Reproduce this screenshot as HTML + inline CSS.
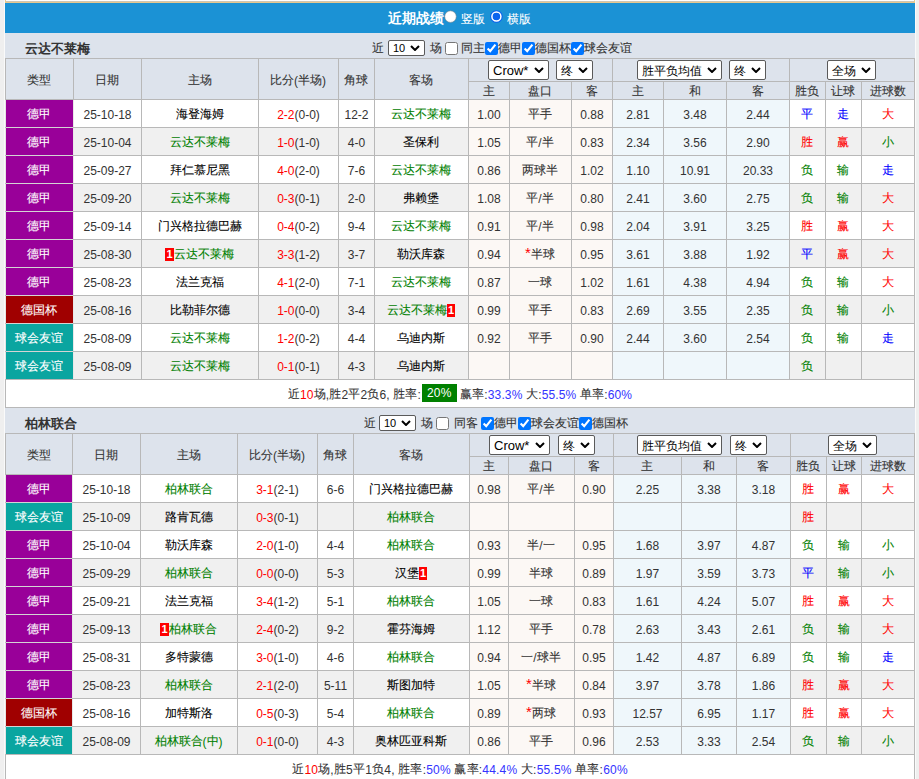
<!DOCTYPE html><html><head><meta charset="utf-8"><style>
html,body{margin:0;padding:0;}
body{width:919px;height:779px;overflow:hidden;position:relative;background:#efefef;font-family:'Liberation Sans', sans-serif;}
select,input{font-family:'Liberation Sans', sans-serif;}
.c{position:relative;top:-1px;-webkit-text-stroke:0.1px currentColor;}
.cb{-webkit-text-stroke:0;}
</style></head><body><div style="position:absolute;left:5px;top:0px;width:910px;height:1px;background:#ffffff;"></div>
<div style="position:absolute;left:5px;top:1px;width:910px;height:1px;background:#cfc6b4;"></div>
<div style="position:absolute;left:5px;top:2px;width:910px;height:1px;background:#e6c88e;"></div>
<div style="position:absolute;left:4px;top:0px;width:1px;height:779px;background:#fafafa;"></div>
<div style="position:absolute;left:915px;top:0px;width:1px;height:779px;background:#fafafa;"></div>
<div style="position:absolute;left:5px;top:3px;width:910px;height:30px;background:#1b92d5;"></div>
<div style="position:absolute;left:5px;top:0px;width:1px;height:3px;background:#e8ca8c;"></div>
<div style="position:absolute;left:914px;top:0px;width:1px;height:3px;background:#e8ca8c;"></div>
<div style="position:absolute;left:388px;top:4px;width:58px;height:30px;line-height:30px;text-align:left;color:#fff;font-size:14px;font-weight:bold;white-space:nowrap;"><span class="c cb">近期战绩</span></div>
<svg style="position:absolute;left:443px;top:9px" width="15" height="15" viewBox="0 0 15 15"><circle cx="7.5" cy="7.6" r="5.8" fill="#fff" stroke="#6d7f8c" stroke-width="0.6"/></svg>
<svg style="position:absolute;left:489px;top:9px" width="15" height="15" viewBox="0 0 15 15"><circle cx="7.4" cy="7.5" r="6.3" fill="#0a63ee"/><circle cx="7.4" cy="7.5" r="4.5" fill="none" stroke="#fff" stroke-width="1.5"/><circle cx="7.4" cy="7.5" r="3.4" fill="#0a63ee"/></svg>
<div style="position:absolute;left:461px;top:5px;width:26px;height:30px;line-height:30px;text-align:left;color:#fff;font-size:12px;font-weight:normal;white-space:nowrap;"><span class="c">竖版</span></div>
<div style="position:absolute;left:507px;top:5px;width:26px;height:30px;line-height:30px;text-align:left;color:#fff;font-size:12px;font-weight:normal;white-space:nowrap;"><span class="c">横版</span></div>
<div style="position:absolute;left:5px;top:33px;width:910px;height:25px;background:#dde3ec;"></div>
<div style="position:absolute;left:25px;top:37px;width:200px;height:25px;line-height:25px;text-align:left;color:#333333;font-size:13px;font-weight:bold;white-space:nowrap;"><span class="c cb">云达不莱梅</span></div>
<div style="position:absolute;left:372px;top:37px;width:60px;height:25px;line-height:25px;text-align:left;color:#333333;font-size:12px;font-weight:normal;white-space:nowrap;"><span class="c">近</span></div>
<div style="position:absolute;left:430px;top:37px;width:60px;height:25px;line-height:25px;text-align:left;color:#333333;font-size:12px;font-weight:normal;white-space:nowrap;"><span class="c">场</span></div>
<input type="checkbox"  style="position:absolute;left:445px;top:42px;width:13px;height:13px;margin:0">
<div style="position:absolute;left:461px;top:37px;width:60px;height:25px;line-height:25px;text-align:left;color:#333333;font-size:12px;font-weight:normal;white-space:nowrap;"><span class="c">同主</span></div>
<input type="checkbox" checked style="position:absolute;left:485px;top:42px;width:13px;height:13px;margin:0">
<div style="position:absolute;left:498px;top:37px;width:60px;height:25px;line-height:25px;text-align:left;color:#333333;font-size:12px;font-weight:normal;white-space:nowrap;"><span class="c">德甲</span></div>
<input type="checkbox" checked style="position:absolute;left:522px;top:42px;width:13px;height:13px;margin:0">
<div style="position:absolute;left:535px;top:37px;width:60px;height:25px;line-height:25px;text-align:left;color:#333333;font-size:12px;font-weight:normal;white-space:nowrap;"><span class="c">德国杯</span></div>
<input type="checkbox" checked style="position:absolute;left:571px;top:42px;width:13px;height:13px;margin:0">
<div style="position:absolute;left:584px;top:37px;width:60px;height:25px;line-height:25px;text-align:left;color:#333333;font-size:12px;font-weight:normal;white-space:nowrap;"><span class="c">球会友谊</span></div>
<div style="position:absolute;left:388px;top:40px;width:35px;height:14px;background:#fff;border:1px solid #5a5a5a;border-radius:2px"></div>
<div style="position:absolute;left:393px;top:40px;height:16px;line-height:16px;font-size:11px;color:#000;white-space:nowrap">10</div>
<svg style="position:absolute;left:410px;top:45px" width="10" height="6" viewBox="0 0 10 6"><path d="M1 1 L5.0 5 L9 1" fill="none" stroke="#000" stroke-width="2"/></svg>
<div style="position:absolute;left:5px;top:58px;width:910px;height:41px;background:#dde3ec;"></div>
<div style="position:absolute;left:5.5px;top:61px;width:67px;height:40px;line-height:40px;text-align:center;color:#333333;font-size:12px;font-weight:normal;white-space:nowrap;"><span class="c">类型</span></div>
<div style="position:absolute;left:73.5px;top:61px;width:67px;height:40px;line-height:40px;text-align:center;color:#333333;font-size:12px;font-weight:normal;white-space:nowrap;"><span class="c">日期</span></div>
<div style="position:absolute;left:141.5px;top:61px;width:116px;height:40px;line-height:40px;text-align:center;color:#333333;font-size:12px;font-weight:normal;white-space:nowrap;"><span class="c">主场</span></div>
<div style="position:absolute;left:258.5px;top:61px;width:79px;height:40px;line-height:40px;text-align:center;color:#333333;font-size:12px;font-weight:normal;white-space:nowrap;"><span class="c">比分</span>(<span class="c">半场</span>)</div>
<div style="position:absolute;left:338.5px;top:61px;width:35px;height:40px;line-height:40px;text-align:center;color:#333333;font-size:12px;font-weight:normal;white-space:nowrap;"><span class="c">角球</span></div>
<div style="position:absolute;left:374.5px;top:61px;width:93px;height:40px;line-height:40px;text-align:center;color:#333333;font-size:12px;font-weight:normal;white-space:nowrap;"><span class="c">客场</span></div>
<div style="position:absolute;left:468.5px;top:84px;width:40px;height:17px;line-height:17px;text-align:center;color:#333333;font-size:12px;font-weight:normal;white-space:nowrap;"><span class="c">主</span></div>
<div style="position:absolute;left:509.5px;top:84px;width:61px;height:17px;line-height:17px;text-align:center;color:#333333;font-size:12px;font-weight:normal;white-space:nowrap;"><span class="c">盘口</span></div>
<div style="position:absolute;left:571.5px;top:84px;width:40px;height:17px;line-height:17px;text-align:center;color:#333333;font-size:12px;font-weight:normal;white-space:nowrap;"><span class="c">客</span></div>
<div style="position:absolute;left:612.5px;top:84px;width:50px;height:17px;line-height:17px;text-align:center;color:#333333;font-size:12px;font-weight:normal;white-space:nowrap;"><span class="c">主</span></div>
<div style="position:absolute;left:663.5px;top:84px;width:62px;height:17px;line-height:17px;text-align:center;color:#333333;font-size:12px;font-weight:normal;white-space:nowrap;"><span class="c">和</span></div>
<div style="position:absolute;left:726.5px;top:84px;width:62px;height:17px;line-height:17px;text-align:center;color:#333333;font-size:12px;font-weight:normal;white-space:nowrap;"><span class="c">客</span></div>
<div style="position:absolute;left:789.5px;top:84px;width:35px;height:17px;line-height:17px;text-align:center;color:#333333;font-size:12px;font-weight:normal;white-space:nowrap;"><span class="c">胜负</span></div>
<div style="position:absolute;left:825.5px;top:84px;width:35px;height:17px;line-height:17px;text-align:center;color:#333333;font-size:12px;font-weight:normal;white-space:nowrap;"><span class="c">让球</span></div>
<div style="position:absolute;left:861.5px;top:84px;width:52px;height:17px;line-height:17px;text-align:center;color:#333333;font-size:12px;font-weight:normal;white-space:nowrap;"><span class="c">进球数</span></div>
<div style="position:absolute;left:488px;top:60px;width:59px;height:18px;background:#fff;border:1px solid #5a5a5a;border-radius:2px"></div>
<div style="position:absolute;left:493px;top:61px;height:20px;line-height:20px;font-size:13px;color:#000;white-space:nowrap">Crow*</div>
<svg style="position:absolute;left:534px;top:67px" width="10" height="6" viewBox="0 0 10 6"><path d="M1 1 L5.0 5 L9 1" fill="none" stroke="#000" stroke-width="2"/></svg>
<div style="position:absolute;left:556px;top:60px;width:35px;height:18px;background:#fff;border:1px solid #5a5a5a;border-radius:2px"></div>
<div style="position:absolute;left:561px;top:61px;height:20px;line-height:20px;font-size:12px;color:#000;white-space:nowrap">终</div>
<svg style="position:absolute;left:578px;top:67px" width="10" height="6" viewBox="0 0 10 6"><path d="M1 1 L5.0 5 L9 1" fill="none" stroke="#000" stroke-width="2"/></svg>
<div style="position:absolute;left:637px;top:60px;width:83px;height:18px;background:#fff;border:1px solid #5a5a5a;border-radius:2px"></div>
<div style="position:absolute;left:642px;top:61px;height:20px;line-height:20px;font-size:12px;color:#000;white-space:nowrap">胜平负均值</div>
<svg style="position:absolute;left:707px;top:67px" width="10" height="6" viewBox="0 0 10 6"><path d="M1 1 L5.0 5 L9 1" fill="none" stroke="#000" stroke-width="2"/></svg>
<div style="position:absolute;left:729px;top:60px;width:35px;height:18px;background:#fff;border:1px solid #5a5a5a;border-radius:2px"></div>
<div style="position:absolute;left:734px;top:61px;height:20px;line-height:20px;font-size:12px;color:#000;white-space:nowrap">终</div>
<svg style="position:absolute;left:751px;top:67px" width="10" height="6" viewBox="0 0 10 6"><path d="M1 1 L5.0 5 L9 1" fill="none" stroke="#000" stroke-width="2"/></svg>
<div style="position:absolute;left:827px;top:60px;width:47px;height:18px;background:#fff;border:1px solid #5a5a5a;border-radius:2px"></div>
<div style="position:absolute;left:832px;top:61px;height:20px;line-height:20px;font-size:12px;color:#000;white-space:nowrap">全场</div>
<svg style="position:absolute;left:861px;top:67px" width="10" height="6" viewBox="0 0 10 6"><path d="M1 1 L5.0 5 L9 1" fill="none" stroke="#000" stroke-width="2"/></svg>
<div style="position:absolute;left:5px;top:99px;width:910px;height:28px;background:#ffffff;"></div>
<div style="position:absolute;left:468px;top:99px;width:41px;height:28px;background:#fcf8f5;"></div>
<div style="position:absolute;left:509px;top:99px;width:62px;height:28px;background:#fcf8f5;"></div>
<div style="position:absolute;left:571px;top:99px;width:41px;height:28px;background:#fcf8f5;"></div>
<div style="position:absolute;left:612px;top:99px;width:51px;height:28px;background:#eff7fb;"></div>
<div style="position:absolute;left:663px;top:99px;width:63px;height:28px;background:#eff7fb;"></div>
<div style="position:absolute;left:726px;top:99px;width:63px;height:28px;background:#eff7fb;"></div>
<div style="position:absolute;left:5px;top:99px;width:68px;height:28px;background:#990099;"></div>
<div style="position:absolute;left:5px;top:127px;width:910px;height:28px;background:#f0f0f0;"></div>
<div style="position:absolute;left:468px;top:127px;width:41px;height:28px;background:#fcf8f5;"></div>
<div style="position:absolute;left:509px;top:127px;width:62px;height:28px;background:#fcf8f5;"></div>
<div style="position:absolute;left:571px;top:127px;width:41px;height:28px;background:#fcf8f5;"></div>
<div style="position:absolute;left:612px;top:127px;width:51px;height:28px;background:#eff7fb;"></div>
<div style="position:absolute;left:663px;top:127px;width:63px;height:28px;background:#eff7fb;"></div>
<div style="position:absolute;left:726px;top:127px;width:63px;height:28px;background:#eff7fb;"></div>
<div style="position:absolute;left:5px;top:127px;width:68px;height:28px;background:#990099;"></div>
<div style="position:absolute;left:5px;top:155px;width:910px;height:28px;background:#ffffff;"></div>
<div style="position:absolute;left:468px;top:155px;width:41px;height:28px;background:#fcf8f5;"></div>
<div style="position:absolute;left:509px;top:155px;width:62px;height:28px;background:#fcf8f5;"></div>
<div style="position:absolute;left:571px;top:155px;width:41px;height:28px;background:#fcf8f5;"></div>
<div style="position:absolute;left:612px;top:155px;width:51px;height:28px;background:#eff7fb;"></div>
<div style="position:absolute;left:663px;top:155px;width:63px;height:28px;background:#eff7fb;"></div>
<div style="position:absolute;left:726px;top:155px;width:63px;height:28px;background:#eff7fb;"></div>
<div style="position:absolute;left:5px;top:155px;width:68px;height:28px;background:#990099;"></div>
<div style="position:absolute;left:5px;top:183px;width:910px;height:28px;background:#f0f0f0;"></div>
<div style="position:absolute;left:468px;top:183px;width:41px;height:28px;background:#fcf8f5;"></div>
<div style="position:absolute;left:509px;top:183px;width:62px;height:28px;background:#fcf8f5;"></div>
<div style="position:absolute;left:571px;top:183px;width:41px;height:28px;background:#fcf8f5;"></div>
<div style="position:absolute;left:612px;top:183px;width:51px;height:28px;background:#eff7fb;"></div>
<div style="position:absolute;left:663px;top:183px;width:63px;height:28px;background:#eff7fb;"></div>
<div style="position:absolute;left:726px;top:183px;width:63px;height:28px;background:#eff7fb;"></div>
<div style="position:absolute;left:5px;top:183px;width:68px;height:28px;background:#990099;"></div>
<div style="position:absolute;left:5px;top:211px;width:910px;height:28px;background:#ffffff;"></div>
<div style="position:absolute;left:468px;top:211px;width:41px;height:28px;background:#fcf8f5;"></div>
<div style="position:absolute;left:509px;top:211px;width:62px;height:28px;background:#fcf8f5;"></div>
<div style="position:absolute;left:571px;top:211px;width:41px;height:28px;background:#fcf8f5;"></div>
<div style="position:absolute;left:612px;top:211px;width:51px;height:28px;background:#eff7fb;"></div>
<div style="position:absolute;left:663px;top:211px;width:63px;height:28px;background:#eff7fb;"></div>
<div style="position:absolute;left:726px;top:211px;width:63px;height:28px;background:#eff7fb;"></div>
<div style="position:absolute;left:5px;top:211px;width:68px;height:28px;background:#990099;"></div>
<div style="position:absolute;left:5px;top:239px;width:910px;height:28px;background:#f0f0f0;"></div>
<div style="position:absolute;left:468px;top:239px;width:41px;height:28px;background:#fcf8f5;"></div>
<div style="position:absolute;left:509px;top:239px;width:62px;height:28px;background:#fcf8f5;"></div>
<div style="position:absolute;left:571px;top:239px;width:41px;height:28px;background:#fcf8f5;"></div>
<div style="position:absolute;left:612px;top:239px;width:51px;height:28px;background:#eff7fb;"></div>
<div style="position:absolute;left:663px;top:239px;width:63px;height:28px;background:#eff7fb;"></div>
<div style="position:absolute;left:726px;top:239px;width:63px;height:28px;background:#eff7fb;"></div>
<div style="position:absolute;left:5px;top:239px;width:68px;height:28px;background:#990099;"></div>
<div style="position:absolute;left:5px;top:267px;width:910px;height:28px;background:#ffffff;"></div>
<div style="position:absolute;left:468px;top:267px;width:41px;height:28px;background:#fcf8f5;"></div>
<div style="position:absolute;left:509px;top:267px;width:62px;height:28px;background:#fcf8f5;"></div>
<div style="position:absolute;left:571px;top:267px;width:41px;height:28px;background:#fcf8f5;"></div>
<div style="position:absolute;left:612px;top:267px;width:51px;height:28px;background:#eff7fb;"></div>
<div style="position:absolute;left:663px;top:267px;width:63px;height:28px;background:#eff7fb;"></div>
<div style="position:absolute;left:726px;top:267px;width:63px;height:28px;background:#eff7fb;"></div>
<div style="position:absolute;left:5px;top:267px;width:68px;height:28px;background:#990099;"></div>
<div style="position:absolute;left:5px;top:295px;width:910px;height:28px;background:#f0f0f0;"></div>
<div style="position:absolute;left:468px;top:295px;width:41px;height:28px;background:#fcf8f5;"></div>
<div style="position:absolute;left:509px;top:295px;width:62px;height:28px;background:#fcf8f5;"></div>
<div style="position:absolute;left:571px;top:295px;width:41px;height:28px;background:#fcf8f5;"></div>
<div style="position:absolute;left:612px;top:295px;width:51px;height:28px;background:#eff7fb;"></div>
<div style="position:absolute;left:663px;top:295px;width:63px;height:28px;background:#eff7fb;"></div>
<div style="position:absolute;left:726px;top:295px;width:63px;height:28px;background:#eff7fb;"></div>
<div style="position:absolute;left:5px;top:295px;width:68px;height:28px;background:#a00000;"></div>
<div style="position:absolute;left:5px;top:323px;width:910px;height:28px;background:#ffffff;"></div>
<div style="position:absolute;left:468px;top:323px;width:41px;height:28px;background:#fcf8f5;"></div>
<div style="position:absolute;left:509px;top:323px;width:62px;height:28px;background:#fcf8f5;"></div>
<div style="position:absolute;left:571px;top:323px;width:41px;height:28px;background:#fcf8f5;"></div>
<div style="position:absolute;left:612px;top:323px;width:51px;height:28px;background:#eff7fb;"></div>
<div style="position:absolute;left:663px;top:323px;width:63px;height:28px;background:#eff7fb;"></div>
<div style="position:absolute;left:726px;top:323px;width:63px;height:28px;background:#eff7fb;"></div>
<div style="position:absolute;left:5px;top:323px;width:68px;height:28px;background:#0aa5a0;"></div>
<div style="position:absolute;left:5px;top:351px;width:910px;height:28px;background:#f0f0f0;"></div>
<div style="position:absolute;left:468px;top:351px;width:41px;height:28px;background:#fcf8f5;"></div>
<div style="position:absolute;left:509px;top:351px;width:62px;height:28px;background:#fcf8f5;"></div>
<div style="position:absolute;left:571px;top:351px;width:41px;height:28px;background:#fcf8f5;"></div>
<div style="position:absolute;left:612px;top:351px;width:51px;height:28px;background:#eff7fb;"></div>
<div style="position:absolute;left:663px;top:351px;width:63px;height:28px;background:#eff7fb;"></div>
<div style="position:absolute;left:726px;top:351px;width:63px;height:28px;background:#eff7fb;"></div>
<div style="position:absolute;left:5px;top:351px;width:68px;height:28px;background:#0aa5a0;"></div>
<div style="position:absolute;left:5px;top:379px;width:910px;height:28px;background:#ffffff;"></div>
<div style="position:absolute;left:5px;top:58px;width:910px;height:1px;background:#b8b8b8;"></div>
<div style="position:absolute;left:468px;top:81px;width:447px;height:1px;background:#b8b8b8;"></div>
<div style="position:absolute;left:5px;top:99px;width:910px;height:1px;background:#b8b8b8;"></div>
<div style="position:absolute;left:5px;top:127px;width:910px;height:1px;background:#b8b8b8;"></div>
<div style="position:absolute;left:5px;top:155px;width:910px;height:1px;background:#b8b8b8;"></div>
<div style="position:absolute;left:5px;top:183px;width:910px;height:1px;background:#b8b8b8;"></div>
<div style="position:absolute;left:5px;top:211px;width:910px;height:1px;background:#b8b8b8;"></div>
<div style="position:absolute;left:5px;top:239px;width:910px;height:1px;background:#b8b8b8;"></div>
<div style="position:absolute;left:5px;top:267px;width:910px;height:1px;background:#b8b8b8;"></div>
<div style="position:absolute;left:5px;top:295px;width:910px;height:1px;background:#b8b8b8;"></div>
<div style="position:absolute;left:5px;top:323px;width:910px;height:1px;background:#b8b8b8;"></div>
<div style="position:absolute;left:5px;top:351px;width:910px;height:1px;background:#b8b8b8;"></div>
<div style="position:absolute;left:5px;top:379px;width:910px;height:1px;background:#b8b8b8;"></div>
<div style="position:absolute;left:5px;top:407px;width:910px;height:1px;background:#b8b8b8;"></div>
<div style="position:absolute;left:5px;top:58px;width:1px;height:322px;background:#b8b8b8;"></div>
<div style="position:absolute;left:73px;top:58px;width:1px;height:322px;background:#b8b8b8;"></div>
<div style="position:absolute;left:141px;top:58px;width:1px;height:322px;background:#b8b8b8;"></div>
<div style="position:absolute;left:258px;top:58px;width:1px;height:322px;background:#b8b8b8;"></div>
<div style="position:absolute;left:338px;top:58px;width:1px;height:322px;background:#b8b8b8;"></div>
<div style="position:absolute;left:374px;top:58px;width:1px;height:322px;background:#b8b8b8;"></div>
<div style="position:absolute;left:468px;top:58px;width:1px;height:322px;background:#b8b8b8;"></div>
<div style="position:absolute;left:509px;top:81px;width:1px;height:299px;background:#b8b8b8;"></div>
<div style="position:absolute;left:571px;top:81px;width:1px;height:299px;background:#b8b8b8;"></div>
<div style="position:absolute;left:612px;top:58px;width:1px;height:322px;background:#b8b8b8;"></div>
<div style="position:absolute;left:663px;top:81px;width:1px;height:299px;background:#b8b8b8;"></div>
<div style="position:absolute;left:726px;top:81px;width:1px;height:299px;background:#b8b8b8;"></div>
<div style="position:absolute;left:789px;top:58px;width:1px;height:322px;background:#b8b8b8;"></div>
<div style="position:absolute;left:825px;top:81px;width:1px;height:299px;background:#b8b8b8;"></div>
<div style="position:absolute;left:861px;top:81px;width:1px;height:299px;background:#b8b8b8;"></div>
<div style="position:absolute;left:914px;top:58px;width:1px;height:322px;background:#b8b8b8;"></div>
<div style="position:absolute;left:5px;top:379px;width:1px;height:29px;background:#b8b8b8;"></div>
<div style="position:absolute;left:914px;top:379px;width:1px;height:29px;background:#b8b8b8;"></div>
<div style="position:absolute;left:5px;top:100px;width:1px;height:27px;background:#e4e4e4;"></div>
<div style="position:absolute;left:73px;top:100px;width:1px;height:27px;background:#e8e8e8;"></div>
<div style="position:absolute;left:6px;top:127px;width:67px;height:1px;background:#d4d4d4;"></div>
<div style="position:absolute;left:5px;top:128px;width:1px;height:27px;background:#e4e4e4;"></div>
<div style="position:absolute;left:73px;top:128px;width:1px;height:27px;background:#e8e8e8;"></div>
<div style="position:absolute;left:6px;top:155px;width:67px;height:1px;background:#d4d4d4;"></div>
<div style="position:absolute;left:5px;top:156px;width:1px;height:27px;background:#e4e4e4;"></div>
<div style="position:absolute;left:73px;top:156px;width:1px;height:27px;background:#e8e8e8;"></div>
<div style="position:absolute;left:6px;top:183px;width:67px;height:1px;background:#d4d4d4;"></div>
<div style="position:absolute;left:5px;top:184px;width:1px;height:27px;background:#e4e4e4;"></div>
<div style="position:absolute;left:73px;top:184px;width:1px;height:27px;background:#e8e8e8;"></div>
<div style="position:absolute;left:6px;top:211px;width:67px;height:1px;background:#d4d4d4;"></div>
<div style="position:absolute;left:5px;top:212px;width:1px;height:27px;background:#e4e4e4;"></div>
<div style="position:absolute;left:73px;top:212px;width:1px;height:27px;background:#e8e8e8;"></div>
<div style="position:absolute;left:6px;top:239px;width:67px;height:1px;background:#d4d4d4;"></div>
<div style="position:absolute;left:5px;top:240px;width:1px;height:27px;background:#e4e4e4;"></div>
<div style="position:absolute;left:73px;top:240px;width:1px;height:27px;background:#e8e8e8;"></div>
<div style="position:absolute;left:6px;top:267px;width:67px;height:1px;background:#d4d4d4;"></div>
<div style="position:absolute;left:5px;top:268px;width:1px;height:27px;background:#e4e4e4;"></div>
<div style="position:absolute;left:73px;top:268px;width:1px;height:27px;background:#e8e8e8;"></div>
<div style="position:absolute;left:6px;top:295px;width:67px;height:1px;background:#d4d4d4;"></div>
<div style="position:absolute;left:5px;top:296px;width:1px;height:27px;background:#e4e4e4;"></div>
<div style="position:absolute;left:73px;top:296px;width:1px;height:27px;background:#e8e8e8;"></div>
<div style="position:absolute;left:6px;top:323px;width:67px;height:1px;background:#d4d4d4;"></div>
<div style="position:absolute;left:5px;top:324px;width:1px;height:27px;background:#e4e4e4;"></div>
<div style="position:absolute;left:73px;top:324px;width:1px;height:27px;background:#e8e8e8;"></div>
<div style="position:absolute;left:6px;top:351px;width:67px;height:1px;background:#d4d4d4;"></div>
<div style="position:absolute;left:5px;top:352px;width:1px;height:27px;background:#e4e4e4;"></div>
<div style="position:absolute;left:73px;top:352px;width:1px;height:27px;background:#e8e8e8;"></div>
<div style="position:absolute;left:5.5px;top:102px;width:67px;height:27px;line-height:27px;text-align:center;color:#ffffff;font-size:12px;font-weight:normal;white-space:nowrap;"><span class="c">德甲</span></div>
<div style="position:absolute;left:74px;top:102px;width:67px;height:27px;line-height:27px;text-align:center;color:#333333;font-size:12px;font-weight:normal;white-space:nowrap;">25-10-18</div>
<div style="position:absolute;left:141.5px;top:102px;width:116px;height:27px;line-height:27px;text-align:center;color:#000000;font-size:12px;font-weight:normal;white-space:nowrap;"><span class="c">海登海姆</span></div>
<div style="position:absolute;left:259px;top:102px;width:79px;height:27px;line-height:27px;text-align:center;color:#333333;font-size:12px;font-weight:normal;white-space:nowrap;"><span style="color:#ff0000">2-2</span>(0-0)</div>
<div style="position:absolute;left:339px;top:102px;width:35px;height:27px;line-height:27px;text-align:center;color:#333333;font-size:12px;font-weight:normal;white-space:nowrap;">12-2</div>
<div style="position:absolute;left:374.5px;top:102px;width:93px;height:27px;line-height:27px;text-align:center;color:#008000;font-size:12px;font-weight:normal;white-space:nowrap;"><span class="c">云达不莱梅</span></div>
<div style="position:absolute;left:469px;top:102px;width:40px;height:27px;line-height:27px;text-align:center;color:#333333;font-size:12px;font-weight:normal;white-space:nowrap;">1.00</div>
<div style="position:absolute;left:509.5px;top:102px;width:61px;height:27px;line-height:27px;text-align:center;color:#333333;font-size:12px;font-weight:normal;white-space:nowrap;"><span class="c">平手</span></div>
<div style="position:absolute;left:572px;top:102px;width:40px;height:27px;line-height:27px;text-align:center;color:#333333;font-size:12px;font-weight:normal;white-space:nowrap;">0.88</div>
<div style="position:absolute;left:613px;top:102px;width:50px;height:27px;line-height:27px;text-align:center;color:#333333;font-size:12px;font-weight:normal;white-space:nowrap;">2.81</div>
<div style="position:absolute;left:664px;top:102px;width:62px;height:27px;line-height:27px;text-align:center;color:#333333;font-size:12px;font-weight:normal;white-space:nowrap;">3.48</div>
<div style="position:absolute;left:727px;top:102px;width:62px;height:27px;line-height:27px;text-align:center;color:#333333;font-size:12px;font-weight:normal;white-space:nowrap;">2.44</div>
<div style="position:absolute;left:789.5px;top:102px;width:35px;height:27px;line-height:27px;text-align:center;color:#0000ff;font-size:12px;font-weight:normal;white-space:nowrap;"><span class="c">平</span></div>
<div style="position:absolute;left:825.5px;top:102px;width:35px;height:27px;line-height:27px;text-align:center;color:#0000ff;font-size:12px;font-weight:normal;white-space:nowrap;"><span class="c">走</span></div>
<div style="position:absolute;left:861.5px;top:102px;width:52px;height:27px;line-height:27px;text-align:center;color:#ff0000;font-size:12px;font-weight:normal;white-space:nowrap;"><span class="c">大</span></div>
<div style="position:absolute;left:5.5px;top:130px;width:67px;height:27px;line-height:27px;text-align:center;color:#ffffff;font-size:12px;font-weight:normal;white-space:nowrap;"><span class="c">德甲</span></div>
<div style="position:absolute;left:74px;top:130px;width:67px;height:27px;line-height:27px;text-align:center;color:#333333;font-size:12px;font-weight:normal;white-space:nowrap;">25-10-04</div>
<div style="position:absolute;left:141.5px;top:130px;width:116px;height:27px;line-height:27px;text-align:center;color:#008000;font-size:12px;font-weight:normal;white-space:nowrap;"><span class="c">云达不莱梅</span></div>
<div style="position:absolute;left:259px;top:130px;width:79px;height:27px;line-height:27px;text-align:center;color:#333333;font-size:12px;font-weight:normal;white-space:nowrap;"><span style="color:#ff0000">1-0</span>(1-0)</div>
<div style="position:absolute;left:339px;top:130px;width:35px;height:27px;line-height:27px;text-align:center;color:#333333;font-size:12px;font-weight:normal;white-space:nowrap;">4-0</div>
<div style="position:absolute;left:374.5px;top:130px;width:93px;height:27px;line-height:27px;text-align:center;color:#000000;font-size:12px;font-weight:normal;white-space:nowrap;"><span class="c">圣保利</span></div>
<div style="position:absolute;left:469px;top:130px;width:40px;height:27px;line-height:27px;text-align:center;color:#333333;font-size:12px;font-weight:normal;white-space:nowrap;">1.05</div>
<div style="position:absolute;left:509.5px;top:130px;width:61px;height:27px;line-height:27px;text-align:center;color:#333333;font-size:12px;font-weight:normal;white-space:nowrap;"><span class="c">平</span>/<span class="c">半</span></div>
<div style="position:absolute;left:572px;top:130px;width:40px;height:27px;line-height:27px;text-align:center;color:#333333;font-size:12px;font-weight:normal;white-space:nowrap;">0.83</div>
<div style="position:absolute;left:613px;top:130px;width:50px;height:27px;line-height:27px;text-align:center;color:#333333;font-size:12px;font-weight:normal;white-space:nowrap;">2.34</div>
<div style="position:absolute;left:664px;top:130px;width:62px;height:27px;line-height:27px;text-align:center;color:#333333;font-size:12px;font-weight:normal;white-space:nowrap;">3.56</div>
<div style="position:absolute;left:727px;top:130px;width:62px;height:27px;line-height:27px;text-align:center;color:#333333;font-size:12px;font-weight:normal;white-space:nowrap;">2.90</div>
<div style="position:absolute;left:789.5px;top:130px;width:35px;height:27px;line-height:27px;text-align:center;color:#ff0000;font-size:12px;font-weight:normal;white-space:nowrap;"><span class="c">胜</span></div>
<div style="position:absolute;left:825.5px;top:130px;width:35px;height:27px;line-height:27px;text-align:center;color:#ff0000;font-size:12px;font-weight:normal;white-space:nowrap;"><span class="c">赢</span></div>
<div style="position:absolute;left:861.5px;top:130px;width:52px;height:27px;line-height:27px;text-align:center;color:#008000;font-size:12px;font-weight:normal;white-space:nowrap;"><span class="c">小</span></div>
<div style="position:absolute;left:5.5px;top:158px;width:67px;height:27px;line-height:27px;text-align:center;color:#ffffff;font-size:12px;font-weight:normal;white-space:nowrap;"><span class="c">德甲</span></div>
<div style="position:absolute;left:74px;top:158px;width:67px;height:27px;line-height:27px;text-align:center;color:#333333;font-size:12px;font-weight:normal;white-space:nowrap;">25-09-27</div>
<div style="position:absolute;left:141.5px;top:158px;width:116px;height:27px;line-height:27px;text-align:center;color:#000000;font-size:12px;font-weight:normal;white-space:nowrap;"><span class="c">拜仁慕尼黑</span></div>
<div style="position:absolute;left:259px;top:158px;width:79px;height:27px;line-height:27px;text-align:center;color:#333333;font-size:12px;font-weight:normal;white-space:nowrap;"><span style="color:#ff0000">4-0</span>(2-0)</div>
<div style="position:absolute;left:339px;top:158px;width:35px;height:27px;line-height:27px;text-align:center;color:#333333;font-size:12px;font-weight:normal;white-space:nowrap;">7-6</div>
<div style="position:absolute;left:374.5px;top:158px;width:93px;height:27px;line-height:27px;text-align:center;color:#008000;font-size:12px;font-weight:normal;white-space:nowrap;"><span class="c">云达不莱梅</span></div>
<div style="position:absolute;left:469px;top:158px;width:40px;height:27px;line-height:27px;text-align:center;color:#333333;font-size:12px;font-weight:normal;white-space:nowrap;">0.86</div>
<div style="position:absolute;left:509.5px;top:158px;width:61px;height:27px;line-height:27px;text-align:center;color:#333333;font-size:12px;font-weight:normal;white-space:nowrap;"><span class="c">两球半</span></div>
<div style="position:absolute;left:572px;top:158px;width:40px;height:27px;line-height:27px;text-align:center;color:#333333;font-size:12px;font-weight:normal;white-space:nowrap;">1.02</div>
<div style="position:absolute;left:613px;top:158px;width:50px;height:27px;line-height:27px;text-align:center;color:#333333;font-size:12px;font-weight:normal;white-space:nowrap;">1.10</div>
<div style="position:absolute;left:664px;top:158px;width:62px;height:27px;line-height:27px;text-align:center;color:#333333;font-size:12px;font-weight:normal;white-space:nowrap;">10.91</div>
<div style="position:absolute;left:727px;top:158px;width:62px;height:27px;line-height:27px;text-align:center;color:#333333;font-size:12px;font-weight:normal;white-space:nowrap;">20.33</div>
<div style="position:absolute;left:789.5px;top:158px;width:35px;height:27px;line-height:27px;text-align:center;color:#008000;font-size:12px;font-weight:normal;white-space:nowrap;"><span class="c">负</span></div>
<div style="position:absolute;left:825.5px;top:158px;width:35px;height:27px;line-height:27px;text-align:center;color:#008000;font-size:12px;font-weight:normal;white-space:nowrap;"><span class="c">输</span></div>
<div style="position:absolute;left:861.5px;top:158px;width:52px;height:27px;line-height:27px;text-align:center;color:#0000ff;font-size:12px;font-weight:normal;white-space:nowrap;"><span class="c">走</span></div>
<div style="position:absolute;left:5.5px;top:186px;width:67px;height:27px;line-height:27px;text-align:center;color:#ffffff;font-size:12px;font-weight:normal;white-space:nowrap;"><span class="c">德甲</span></div>
<div style="position:absolute;left:74px;top:186px;width:67px;height:27px;line-height:27px;text-align:center;color:#333333;font-size:12px;font-weight:normal;white-space:nowrap;">25-09-20</div>
<div style="position:absolute;left:141.5px;top:186px;width:116px;height:27px;line-height:27px;text-align:center;color:#008000;font-size:12px;font-weight:normal;white-space:nowrap;"><span class="c">云达不莱梅</span></div>
<div style="position:absolute;left:259px;top:186px;width:79px;height:27px;line-height:27px;text-align:center;color:#333333;font-size:12px;font-weight:normal;white-space:nowrap;"><span style="color:#ff0000">0-3</span>(0-1)</div>
<div style="position:absolute;left:339px;top:186px;width:35px;height:27px;line-height:27px;text-align:center;color:#333333;font-size:12px;font-weight:normal;white-space:nowrap;">2-0</div>
<div style="position:absolute;left:374.5px;top:186px;width:93px;height:27px;line-height:27px;text-align:center;color:#000000;font-size:12px;font-weight:normal;white-space:nowrap;"><span class="c">弗赖堡</span></div>
<div style="position:absolute;left:469px;top:186px;width:40px;height:27px;line-height:27px;text-align:center;color:#333333;font-size:12px;font-weight:normal;white-space:nowrap;">1.08</div>
<div style="position:absolute;left:509.5px;top:186px;width:61px;height:27px;line-height:27px;text-align:center;color:#333333;font-size:12px;font-weight:normal;white-space:nowrap;"><span class="c">平</span>/<span class="c">半</span></div>
<div style="position:absolute;left:572px;top:186px;width:40px;height:27px;line-height:27px;text-align:center;color:#333333;font-size:12px;font-weight:normal;white-space:nowrap;">0.80</div>
<div style="position:absolute;left:613px;top:186px;width:50px;height:27px;line-height:27px;text-align:center;color:#333333;font-size:12px;font-weight:normal;white-space:nowrap;">2.41</div>
<div style="position:absolute;left:664px;top:186px;width:62px;height:27px;line-height:27px;text-align:center;color:#333333;font-size:12px;font-weight:normal;white-space:nowrap;">3.60</div>
<div style="position:absolute;left:727px;top:186px;width:62px;height:27px;line-height:27px;text-align:center;color:#333333;font-size:12px;font-weight:normal;white-space:nowrap;">2.75</div>
<div style="position:absolute;left:789.5px;top:186px;width:35px;height:27px;line-height:27px;text-align:center;color:#008000;font-size:12px;font-weight:normal;white-space:nowrap;"><span class="c">负</span></div>
<div style="position:absolute;left:825.5px;top:186px;width:35px;height:27px;line-height:27px;text-align:center;color:#008000;font-size:12px;font-weight:normal;white-space:nowrap;"><span class="c">输</span></div>
<div style="position:absolute;left:861.5px;top:186px;width:52px;height:27px;line-height:27px;text-align:center;color:#ff0000;font-size:12px;font-weight:normal;white-space:nowrap;"><span class="c">大</span></div>
<div style="position:absolute;left:5.5px;top:214px;width:67px;height:27px;line-height:27px;text-align:center;color:#ffffff;font-size:12px;font-weight:normal;white-space:nowrap;"><span class="c">德甲</span></div>
<div style="position:absolute;left:74px;top:214px;width:67px;height:27px;line-height:27px;text-align:center;color:#333333;font-size:12px;font-weight:normal;white-space:nowrap;">25-09-14</div>
<div style="position:absolute;left:141.5px;top:214px;width:116px;height:27px;line-height:27px;text-align:center;color:#000000;font-size:12px;font-weight:normal;white-space:nowrap;"><span class="c">门兴格拉德巴赫</span></div>
<div style="position:absolute;left:259px;top:214px;width:79px;height:27px;line-height:27px;text-align:center;color:#333333;font-size:12px;font-weight:normal;white-space:nowrap;"><span style="color:#ff0000">0-4</span>(0-2)</div>
<div style="position:absolute;left:339px;top:214px;width:35px;height:27px;line-height:27px;text-align:center;color:#333333;font-size:12px;font-weight:normal;white-space:nowrap;">9-4</div>
<div style="position:absolute;left:374.5px;top:214px;width:93px;height:27px;line-height:27px;text-align:center;color:#008000;font-size:12px;font-weight:normal;white-space:nowrap;"><span class="c">云达不莱梅</span></div>
<div style="position:absolute;left:469px;top:214px;width:40px;height:27px;line-height:27px;text-align:center;color:#333333;font-size:12px;font-weight:normal;white-space:nowrap;">0.91</div>
<div style="position:absolute;left:509.5px;top:214px;width:61px;height:27px;line-height:27px;text-align:center;color:#333333;font-size:12px;font-weight:normal;white-space:nowrap;"><span class="c">平</span>/<span class="c">半</span></div>
<div style="position:absolute;left:572px;top:214px;width:40px;height:27px;line-height:27px;text-align:center;color:#333333;font-size:12px;font-weight:normal;white-space:nowrap;">0.98</div>
<div style="position:absolute;left:613px;top:214px;width:50px;height:27px;line-height:27px;text-align:center;color:#333333;font-size:12px;font-weight:normal;white-space:nowrap;">2.04</div>
<div style="position:absolute;left:664px;top:214px;width:62px;height:27px;line-height:27px;text-align:center;color:#333333;font-size:12px;font-weight:normal;white-space:nowrap;">3.91</div>
<div style="position:absolute;left:727px;top:214px;width:62px;height:27px;line-height:27px;text-align:center;color:#333333;font-size:12px;font-weight:normal;white-space:nowrap;">3.25</div>
<div style="position:absolute;left:789.5px;top:214px;width:35px;height:27px;line-height:27px;text-align:center;color:#ff0000;font-size:12px;font-weight:normal;white-space:nowrap;"><span class="c">胜</span></div>
<div style="position:absolute;left:825.5px;top:214px;width:35px;height:27px;line-height:27px;text-align:center;color:#ff0000;font-size:12px;font-weight:normal;white-space:nowrap;"><span class="c">赢</span></div>
<div style="position:absolute;left:861.5px;top:214px;width:52px;height:27px;line-height:27px;text-align:center;color:#ff0000;font-size:12px;font-weight:normal;white-space:nowrap;"><span class="c">大</span></div>
<div style="position:absolute;left:5.5px;top:242px;width:67px;height:27px;line-height:27px;text-align:center;color:#ffffff;font-size:12px;font-weight:normal;white-space:nowrap;"><span class="c">德甲</span></div>
<div style="position:absolute;left:74px;top:242px;width:67px;height:27px;line-height:27px;text-align:center;color:#333333;font-size:12px;font-weight:normal;white-space:nowrap;">25-08-30</div>
<div style="position:absolute;left:141.5px;top:242px;width:116px;height:27px;line-height:27px;text-align:center;color:#008000;font-size:12px;font-weight:normal;white-space:nowrap;"><span style="display:inline-block;background:#f00;color:#fff;font-weight:bold;font-size:11px;line-height:13px;height:13px;padding:0 1px;position:relative;top:-1px">1</span><span class="c">云达不莱梅</span></div>
<div style="position:absolute;left:259px;top:242px;width:79px;height:27px;line-height:27px;text-align:center;color:#333333;font-size:12px;font-weight:normal;white-space:nowrap;"><span style="color:#ff0000">3-3</span>(1-2)</div>
<div style="position:absolute;left:339px;top:242px;width:35px;height:27px;line-height:27px;text-align:center;color:#333333;font-size:12px;font-weight:normal;white-space:nowrap;">3-7</div>
<div style="position:absolute;left:374.5px;top:242px;width:93px;height:27px;line-height:27px;text-align:center;color:#000000;font-size:12px;font-weight:normal;white-space:nowrap;"><span class="c">勒沃库森</span></div>
<div style="position:absolute;left:469px;top:242px;width:40px;height:27px;line-height:27px;text-align:center;color:#333333;font-size:12px;font-weight:normal;white-space:nowrap;">0.94</div>
<div style="position:absolute;left:509.5px;top:242px;width:61px;height:27px;line-height:27px;text-align:center;color:#333333;font-size:12px;font-weight:normal;white-space:nowrap;"><span style="color:#ff0000;font-size:15px;position:relative;top:-1px;line-height:0">*</span><span class="c">半球</span></div>
<div style="position:absolute;left:572px;top:242px;width:40px;height:27px;line-height:27px;text-align:center;color:#333333;font-size:12px;font-weight:normal;white-space:nowrap;">0.95</div>
<div style="position:absolute;left:613px;top:242px;width:50px;height:27px;line-height:27px;text-align:center;color:#333333;font-size:12px;font-weight:normal;white-space:nowrap;">3.61</div>
<div style="position:absolute;left:664px;top:242px;width:62px;height:27px;line-height:27px;text-align:center;color:#333333;font-size:12px;font-weight:normal;white-space:nowrap;">3.88</div>
<div style="position:absolute;left:727px;top:242px;width:62px;height:27px;line-height:27px;text-align:center;color:#333333;font-size:12px;font-weight:normal;white-space:nowrap;">1.92</div>
<div style="position:absolute;left:789.5px;top:242px;width:35px;height:27px;line-height:27px;text-align:center;color:#0000ff;font-size:12px;font-weight:normal;white-space:nowrap;"><span class="c">平</span></div>
<div style="position:absolute;left:825.5px;top:242px;width:35px;height:27px;line-height:27px;text-align:center;color:#ff0000;font-size:12px;font-weight:normal;white-space:nowrap;"><span class="c">赢</span></div>
<div style="position:absolute;left:861.5px;top:242px;width:52px;height:27px;line-height:27px;text-align:center;color:#ff0000;font-size:12px;font-weight:normal;white-space:nowrap;"><span class="c">大</span></div>
<div style="position:absolute;left:5.5px;top:270px;width:67px;height:27px;line-height:27px;text-align:center;color:#ffffff;font-size:12px;font-weight:normal;white-space:nowrap;"><span class="c">德甲</span></div>
<div style="position:absolute;left:74px;top:270px;width:67px;height:27px;line-height:27px;text-align:center;color:#333333;font-size:12px;font-weight:normal;white-space:nowrap;">25-08-23</div>
<div style="position:absolute;left:141.5px;top:270px;width:116px;height:27px;line-height:27px;text-align:center;color:#000000;font-size:12px;font-weight:normal;white-space:nowrap;"><span class="c">法兰克福</span></div>
<div style="position:absolute;left:259px;top:270px;width:79px;height:27px;line-height:27px;text-align:center;color:#333333;font-size:12px;font-weight:normal;white-space:nowrap;"><span style="color:#ff0000">4-1</span>(2-0)</div>
<div style="position:absolute;left:339px;top:270px;width:35px;height:27px;line-height:27px;text-align:center;color:#333333;font-size:12px;font-weight:normal;white-space:nowrap;">7-1</div>
<div style="position:absolute;left:374.5px;top:270px;width:93px;height:27px;line-height:27px;text-align:center;color:#008000;font-size:12px;font-weight:normal;white-space:nowrap;"><span class="c">云达不莱梅</span></div>
<div style="position:absolute;left:469px;top:270px;width:40px;height:27px;line-height:27px;text-align:center;color:#333333;font-size:12px;font-weight:normal;white-space:nowrap;">0.87</div>
<div style="position:absolute;left:509.5px;top:270px;width:61px;height:27px;line-height:27px;text-align:center;color:#333333;font-size:12px;font-weight:normal;white-space:nowrap;"><span class="c">一球</span></div>
<div style="position:absolute;left:572px;top:270px;width:40px;height:27px;line-height:27px;text-align:center;color:#333333;font-size:12px;font-weight:normal;white-space:nowrap;">1.02</div>
<div style="position:absolute;left:613px;top:270px;width:50px;height:27px;line-height:27px;text-align:center;color:#333333;font-size:12px;font-weight:normal;white-space:nowrap;">1.61</div>
<div style="position:absolute;left:664px;top:270px;width:62px;height:27px;line-height:27px;text-align:center;color:#333333;font-size:12px;font-weight:normal;white-space:nowrap;">4.38</div>
<div style="position:absolute;left:727px;top:270px;width:62px;height:27px;line-height:27px;text-align:center;color:#333333;font-size:12px;font-weight:normal;white-space:nowrap;">4.94</div>
<div style="position:absolute;left:789.5px;top:270px;width:35px;height:27px;line-height:27px;text-align:center;color:#008000;font-size:12px;font-weight:normal;white-space:nowrap;"><span class="c">负</span></div>
<div style="position:absolute;left:825.5px;top:270px;width:35px;height:27px;line-height:27px;text-align:center;color:#008000;font-size:12px;font-weight:normal;white-space:nowrap;"><span class="c">输</span></div>
<div style="position:absolute;left:861.5px;top:270px;width:52px;height:27px;line-height:27px;text-align:center;color:#ff0000;font-size:12px;font-weight:normal;white-space:nowrap;"><span class="c">大</span></div>
<div style="position:absolute;left:5.5px;top:298px;width:67px;height:27px;line-height:27px;text-align:center;color:#ffffff;font-size:12px;font-weight:normal;white-space:nowrap;"><span class="c">德国杯</span></div>
<div style="position:absolute;left:74px;top:298px;width:67px;height:27px;line-height:27px;text-align:center;color:#333333;font-size:12px;font-weight:normal;white-space:nowrap;">25-08-16</div>
<div style="position:absolute;left:141.5px;top:298px;width:116px;height:27px;line-height:27px;text-align:center;color:#000000;font-size:12px;font-weight:normal;white-space:nowrap;"><span class="c">比勒菲尔德</span></div>
<div style="position:absolute;left:259px;top:298px;width:79px;height:27px;line-height:27px;text-align:center;color:#333333;font-size:12px;font-weight:normal;white-space:nowrap;"><span style="color:#ff0000">1-0</span>(0-0)</div>
<div style="position:absolute;left:339px;top:298px;width:35px;height:27px;line-height:27px;text-align:center;color:#333333;font-size:12px;font-weight:normal;white-space:nowrap;">3-4</div>
<div style="position:absolute;left:374.5px;top:298px;width:93px;height:27px;line-height:27px;text-align:center;color:#008000;font-size:12px;font-weight:normal;white-space:nowrap;"><span class="c">云达不莱梅</span><span style="display:inline-block;background:#f00;color:#fff;font-weight:bold;font-size:11px;line-height:13px;height:13px;padding:0 1px;position:relative;top:-1px">1</span></div>
<div style="position:absolute;left:469px;top:298px;width:40px;height:27px;line-height:27px;text-align:center;color:#333333;font-size:12px;font-weight:normal;white-space:nowrap;">0.99</div>
<div style="position:absolute;left:509.5px;top:298px;width:61px;height:27px;line-height:27px;text-align:center;color:#333333;font-size:12px;font-weight:normal;white-space:nowrap;"><span class="c">平手</span></div>
<div style="position:absolute;left:572px;top:298px;width:40px;height:27px;line-height:27px;text-align:center;color:#333333;font-size:12px;font-weight:normal;white-space:nowrap;">0.83</div>
<div style="position:absolute;left:613px;top:298px;width:50px;height:27px;line-height:27px;text-align:center;color:#333333;font-size:12px;font-weight:normal;white-space:nowrap;">2.69</div>
<div style="position:absolute;left:664px;top:298px;width:62px;height:27px;line-height:27px;text-align:center;color:#333333;font-size:12px;font-weight:normal;white-space:nowrap;">3.55</div>
<div style="position:absolute;left:727px;top:298px;width:62px;height:27px;line-height:27px;text-align:center;color:#333333;font-size:12px;font-weight:normal;white-space:nowrap;">2.35</div>
<div style="position:absolute;left:789.5px;top:298px;width:35px;height:27px;line-height:27px;text-align:center;color:#008000;font-size:12px;font-weight:normal;white-space:nowrap;"><span class="c">负</span></div>
<div style="position:absolute;left:825.5px;top:298px;width:35px;height:27px;line-height:27px;text-align:center;color:#008000;font-size:12px;font-weight:normal;white-space:nowrap;"><span class="c">输</span></div>
<div style="position:absolute;left:861.5px;top:298px;width:52px;height:27px;line-height:27px;text-align:center;color:#008000;font-size:12px;font-weight:normal;white-space:nowrap;"><span class="c">小</span></div>
<div style="position:absolute;left:5.5px;top:326px;width:67px;height:27px;line-height:27px;text-align:center;color:#ffffff;font-size:12px;font-weight:normal;white-space:nowrap;"><span class="c">球会友谊</span></div>
<div style="position:absolute;left:74px;top:326px;width:67px;height:27px;line-height:27px;text-align:center;color:#333333;font-size:12px;font-weight:normal;white-space:nowrap;">25-08-09</div>
<div style="position:absolute;left:141.5px;top:326px;width:116px;height:27px;line-height:27px;text-align:center;color:#008000;font-size:12px;font-weight:normal;white-space:nowrap;"><span class="c">云达不莱梅</span></div>
<div style="position:absolute;left:259px;top:326px;width:79px;height:27px;line-height:27px;text-align:center;color:#333333;font-size:12px;font-weight:normal;white-space:nowrap;"><span style="color:#ff0000">1-2</span>(0-2)</div>
<div style="position:absolute;left:339px;top:326px;width:35px;height:27px;line-height:27px;text-align:center;color:#333333;font-size:12px;font-weight:normal;white-space:nowrap;">4-4</div>
<div style="position:absolute;left:374.5px;top:326px;width:93px;height:27px;line-height:27px;text-align:center;color:#000000;font-size:12px;font-weight:normal;white-space:nowrap;"><span class="c">乌迪内斯</span></div>
<div style="position:absolute;left:469px;top:326px;width:40px;height:27px;line-height:27px;text-align:center;color:#333333;font-size:12px;font-weight:normal;white-space:nowrap;">0.92</div>
<div style="position:absolute;left:509.5px;top:326px;width:61px;height:27px;line-height:27px;text-align:center;color:#333333;font-size:12px;font-weight:normal;white-space:nowrap;"><span class="c">平手</span></div>
<div style="position:absolute;left:572px;top:326px;width:40px;height:27px;line-height:27px;text-align:center;color:#333333;font-size:12px;font-weight:normal;white-space:nowrap;">0.90</div>
<div style="position:absolute;left:613px;top:326px;width:50px;height:27px;line-height:27px;text-align:center;color:#333333;font-size:12px;font-weight:normal;white-space:nowrap;">2.44</div>
<div style="position:absolute;left:664px;top:326px;width:62px;height:27px;line-height:27px;text-align:center;color:#333333;font-size:12px;font-weight:normal;white-space:nowrap;">3.60</div>
<div style="position:absolute;left:727px;top:326px;width:62px;height:27px;line-height:27px;text-align:center;color:#333333;font-size:12px;font-weight:normal;white-space:nowrap;">2.54</div>
<div style="position:absolute;left:789.5px;top:326px;width:35px;height:27px;line-height:27px;text-align:center;color:#008000;font-size:12px;font-weight:normal;white-space:nowrap;"><span class="c">负</span></div>
<div style="position:absolute;left:825.5px;top:326px;width:35px;height:27px;line-height:27px;text-align:center;color:#008000;font-size:12px;font-weight:normal;white-space:nowrap;"><span class="c">输</span></div>
<div style="position:absolute;left:861.5px;top:326px;width:52px;height:27px;line-height:27px;text-align:center;color:#0000ff;font-size:12px;font-weight:normal;white-space:nowrap;"><span class="c">走</span></div>
<div style="position:absolute;left:5.5px;top:354px;width:67px;height:27px;line-height:27px;text-align:center;color:#ffffff;font-size:12px;font-weight:normal;white-space:nowrap;"><span class="c">球会友谊</span></div>
<div style="position:absolute;left:74px;top:354px;width:67px;height:27px;line-height:27px;text-align:center;color:#333333;font-size:12px;font-weight:normal;white-space:nowrap;">25-08-09</div>
<div style="position:absolute;left:141.5px;top:354px;width:116px;height:27px;line-height:27px;text-align:center;color:#008000;font-size:12px;font-weight:normal;white-space:nowrap;"><span class="c">云达不莱梅</span></div>
<div style="position:absolute;left:259px;top:354px;width:79px;height:27px;line-height:27px;text-align:center;color:#333333;font-size:12px;font-weight:normal;white-space:nowrap;"><span style="color:#ff0000">0-1</span>(0-1)</div>
<div style="position:absolute;left:339px;top:354px;width:35px;height:27px;line-height:27px;text-align:center;color:#333333;font-size:12px;font-weight:normal;white-space:nowrap;">4-3</div>
<div style="position:absolute;left:374.5px;top:354px;width:93px;height:27px;line-height:27px;text-align:center;color:#000000;font-size:12px;font-weight:normal;white-space:nowrap;"><span class="c">乌迪内斯</span></div>
<div style="position:absolute;left:789.5px;top:354px;width:35px;height:27px;line-height:27px;text-align:center;color:#008000;font-size:12px;font-weight:normal;white-space:nowrap;"><span class="c">负</span></div>
<div style="position:absolute;left:5px;top:382px;width:910px;height:27px;line-height:27px;text-align:center;color:#333333;font-size:12px;font-weight:normal;white-space:nowrap;letter-spacing:0.15px"><span class="c">近</span><span style="color:#ff0000">10</span><span class="c">场</span>,<span class="c">胜</span>2<span class="c">平</span>2<span class="c">负</span>6, <span class="c">胜率</span>:<span style="display:inline-block;background:#008000;color:#fff;padding:1px 6px 0 5px;line-height:17px;margin:0 -1px 0 1px;position:relative;top:-2px">20%</span> <span class="c">赢率</span>:<span style="color:#3333ff">33.3%</span> <span class="c">大</span>:<span style="color:#3333ff">55.5%</span> <span class="c">单率</span>:<span style="color:#3333ff">60%</span></div>
<div style="position:absolute;left:5px;top:408px;width:910px;height:25px;background:#dde3ec;"></div>
<div style="position:absolute;left:25px;top:412px;width:200px;height:25px;line-height:25px;text-align:left;color:#333333;font-size:13px;font-weight:bold;white-space:nowrap;"><span class="c cb">柏林联合</span></div>
<div style="position:absolute;left:364px;top:412px;width:60px;height:25px;line-height:25px;text-align:left;color:#333333;font-size:12px;font-weight:normal;white-space:nowrap;"><span class="c">近</span></div>
<div style="position:absolute;left:421px;top:412px;width:60px;height:25px;line-height:25px;text-align:left;color:#333333;font-size:12px;font-weight:normal;white-space:nowrap;"><span class="c">场</span></div>
<input type="checkbox"  style="position:absolute;left:436px;top:417px;width:13px;height:13px;margin:0">
<div style="position:absolute;left:454px;top:412px;width:60px;height:25px;line-height:25px;text-align:left;color:#333333;font-size:12px;font-weight:normal;white-space:nowrap;"><span class="c">同客</span></div>
<input type="checkbox" checked style="position:absolute;left:481px;top:417px;width:13px;height:13px;margin:0">
<div style="position:absolute;left:494px;top:412px;width:60px;height:25px;line-height:25px;text-align:left;color:#333333;font-size:12px;font-weight:normal;white-space:nowrap;"><span class="c">德甲</span></div>
<input type="checkbox" checked style="position:absolute;left:518px;top:417px;width:13px;height:13px;margin:0">
<div style="position:absolute;left:531px;top:412px;width:60px;height:25px;line-height:25px;text-align:left;color:#333333;font-size:12px;font-weight:normal;white-space:nowrap;"><span class="c">球会友谊</span></div>
<input type="checkbox" checked style="position:absolute;left:579px;top:417px;width:13px;height:13px;margin:0">
<div style="position:absolute;left:592px;top:412px;width:60px;height:25px;line-height:25px;text-align:left;color:#333333;font-size:12px;font-weight:normal;white-space:nowrap;"><span class="c">德国杯</span></div>
<div style="position:absolute;left:379px;top:415px;width:35px;height:14px;background:#fff;border:1px solid #5a5a5a;border-radius:2px"></div>
<div style="position:absolute;left:384px;top:415px;height:16px;line-height:16px;font-size:11px;color:#000;white-space:nowrap">10</div>
<svg style="position:absolute;left:401px;top:420px" width="10" height="6" viewBox="0 0 10 6"><path d="M1 1 L5.0 5 L9 1" fill="none" stroke="#000" stroke-width="2"/></svg>
<div style="position:absolute;left:5px;top:433px;width:910px;height:41px;background:#dde3ec;"></div>
<div style="position:absolute;left:5.5px;top:436px;width:66px;height:40px;line-height:40px;text-align:center;color:#333333;font-size:12px;font-weight:normal;white-space:nowrap;"><span class="c">类型</span></div>
<div style="position:absolute;left:72.5px;top:436px;width:67px;height:40px;line-height:40px;text-align:center;color:#333333;font-size:12px;font-weight:normal;white-space:nowrap;"><span class="c">日期</span></div>
<div style="position:absolute;left:140.5px;top:436px;width:96px;height:40px;line-height:40px;text-align:center;color:#333333;font-size:12px;font-weight:normal;white-space:nowrap;"><span class="c">主场</span></div>
<div style="position:absolute;left:237.5px;top:436px;width:79px;height:40px;line-height:40px;text-align:center;color:#333333;font-size:12px;font-weight:normal;white-space:nowrap;"><span class="c">比分</span>(<span class="c">半场</span>)</div>
<div style="position:absolute;left:317.5px;top:436px;width:35px;height:40px;line-height:40px;text-align:center;color:#333333;font-size:12px;font-weight:normal;white-space:nowrap;"><span class="c">角球</span></div>
<div style="position:absolute;left:353.5px;top:436px;width:115px;height:40px;line-height:40px;text-align:center;color:#333333;font-size:12px;font-weight:normal;white-space:nowrap;"><span class="c">客场</span></div>
<div style="position:absolute;left:469.5px;top:459px;width:38px;height:17px;line-height:17px;text-align:center;color:#333333;font-size:12px;font-weight:normal;white-space:nowrap;"><span class="c">主</span></div>
<div style="position:absolute;left:508.5px;top:459px;width:65px;height:17px;line-height:17px;text-align:center;color:#333333;font-size:12px;font-weight:normal;white-space:nowrap;"><span class="c">盘口</span></div>
<div style="position:absolute;left:574.5px;top:459px;width:38px;height:17px;line-height:17px;text-align:center;color:#333333;font-size:12px;font-weight:normal;white-space:nowrap;"><span class="c">客</span></div>
<div style="position:absolute;left:613.5px;top:459px;width:67px;height:17px;line-height:17px;text-align:center;color:#333333;font-size:12px;font-weight:normal;white-space:nowrap;"><span class="c">主</span></div>
<div style="position:absolute;left:681.5px;top:459px;width:54px;height:17px;line-height:17px;text-align:center;color:#333333;font-size:12px;font-weight:normal;white-space:nowrap;"><span class="c">和</span></div>
<div style="position:absolute;left:736.5px;top:459px;width:53px;height:17px;line-height:17px;text-align:center;color:#333333;font-size:12px;font-weight:normal;white-space:nowrap;"><span class="c">客</span></div>
<div style="position:absolute;left:790.5px;top:459px;width:35px;height:17px;line-height:17px;text-align:center;color:#333333;font-size:12px;font-weight:normal;white-space:nowrap;"><span class="c">胜负</span></div>
<div style="position:absolute;left:826.5px;top:459px;width:34px;height:17px;line-height:17px;text-align:center;color:#333333;font-size:12px;font-weight:normal;white-space:nowrap;"><span class="c">让球</span></div>
<div style="position:absolute;left:861.5px;top:459px;width:52px;height:17px;line-height:17px;text-align:center;color:#333333;font-size:12px;font-weight:normal;white-space:nowrap;"><span class="c">进球数</span></div>
<div style="position:absolute;left:489px;top:435px;width:59px;height:18px;background:#fff;border:1px solid #5a5a5a;border-radius:2px"></div>
<div style="position:absolute;left:494px;top:436px;height:20px;line-height:20px;font-size:13px;color:#000;white-space:nowrap">Crow*</div>
<svg style="position:absolute;left:535px;top:442px" width="10" height="6" viewBox="0 0 10 6"><path d="M1 1 L5.0 5 L9 1" fill="none" stroke="#000" stroke-width="2"/></svg>
<div style="position:absolute;left:558px;top:435px;width:35px;height:18px;background:#fff;border:1px solid #5a5a5a;border-radius:2px"></div>
<div style="position:absolute;left:563px;top:436px;height:20px;line-height:20px;font-size:12px;color:#000;white-space:nowrap">终</div>
<svg style="position:absolute;left:580px;top:442px" width="10" height="6" viewBox="0 0 10 6"><path d="M1 1 L5.0 5 L9 1" fill="none" stroke="#000" stroke-width="2"/></svg>
<div style="position:absolute;left:637px;top:435px;width:83px;height:18px;background:#fff;border:1px solid #5a5a5a;border-radius:2px"></div>
<div style="position:absolute;left:642px;top:436px;height:20px;line-height:20px;font-size:12px;color:#000;white-space:nowrap">胜平负均值</div>
<svg style="position:absolute;left:707px;top:442px" width="10" height="6" viewBox="0 0 10 6"><path d="M1 1 L5.0 5 L9 1" fill="none" stroke="#000" stroke-width="2"/></svg>
<div style="position:absolute;left:730px;top:435px;width:35px;height:18px;background:#fff;border:1px solid #5a5a5a;border-radius:2px"></div>
<div style="position:absolute;left:735px;top:436px;height:20px;line-height:20px;font-size:12px;color:#000;white-space:nowrap">终</div>
<svg style="position:absolute;left:752px;top:442px" width="10" height="6" viewBox="0 0 10 6"><path d="M1 1 L5.0 5 L9 1" fill="none" stroke="#000" stroke-width="2"/></svg>
<div style="position:absolute;left:828px;top:435px;width:47px;height:18px;background:#fff;border:1px solid #5a5a5a;border-radius:2px"></div>
<div style="position:absolute;left:833px;top:436px;height:20px;line-height:20px;font-size:12px;color:#000;white-space:nowrap">全场</div>
<svg style="position:absolute;left:862px;top:442px" width="10" height="6" viewBox="0 0 10 6"><path d="M1 1 L5.0 5 L9 1" fill="none" stroke="#000" stroke-width="2"/></svg>
<div style="position:absolute;left:5px;top:474px;width:910px;height:28px;background:#ffffff;"></div>
<div style="position:absolute;left:469px;top:474px;width:39px;height:28px;background:#fcf8f5;"></div>
<div style="position:absolute;left:508px;top:474px;width:66px;height:28px;background:#fcf8f5;"></div>
<div style="position:absolute;left:574px;top:474px;width:39px;height:28px;background:#fcf8f5;"></div>
<div style="position:absolute;left:613px;top:474px;width:68px;height:28px;background:#eff7fb;"></div>
<div style="position:absolute;left:681px;top:474px;width:55px;height:28px;background:#eff7fb;"></div>
<div style="position:absolute;left:736px;top:474px;width:54px;height:28px;background:#eff7fb;"></div>
<div style="position:absolute;left:5px;top:474px;width:67px;height:28px;background:#990099;"></div>
<div style="position:absolute;left:5px;top:502px;width:910px;height:28px;background:#f0f0f0;"></div>
<div style="position:absolute;left:469px;top:502px;width:39px;height:28px;background:#fcf8f5;"></div>
<div style="position:absolute;left:508px;top:502px;width:66px;height:28px;background:#fcf8f5;"></div>
<div style="position:absolute;left:574px;top:502px;width:39px;height:28px;background:#fcf8f5;"></div>
<div style="position:absolute;left:613px;top:502px;width:68px;height:28px;background:#eff7fb;"></div>
<div style="position:absolute;left:681px;top:502px;width:55px;height:28px;background:#eff7fb;"></div>
<div style="position:absolute;left:736px;top:502px;width:54px;height:28px;background:#eff7fb;"></div>
<div style="position:absolute;left:5px;top:502px;width:67px;height:28px;background:#0aa5a0;"></div>
<div style="position:absolute;left:5px;top:530px;width:910px;height:28px;background:#ffffff;"></div>
<div style="position:absolute;left:469px;top:530px;width:39px;height:28px;background:#fcf8f5;"></div>
<div style="position:absolute;left:508px;top:530px;width:66px;height:28px;background:#fcf8f5;"></div>
<div style="position:absolute;left:574px;top:530px;width:39px;height:28px;background:#fcf8f5;"></div>
<div style="position:absolute;left:613px;top:530px;width:68px;height:28px;background:#eff7fb;"></div>
<div style="position:absolute;left:681px;top:530px;width:55px;height:28px;background:#eff7fb;"></div>
<div style="position:absolute;left:736px;top:530px;width:54px;height:28px;background:#eff7fb;"></div>
<div style="position:absolute;left:5px;top:530px;width:67px;height:28px;background:#990099;"></div>
<div style="position:absolute;left:5px;top:558px;width:910px;height:28px;background:#f0f0f0;"></div>
<div style="position:absolute;left:469px;top:558px;width:39px;height:28px;background:#fcf8f5;"></div>
<div style="position:absolute;left:508px;top:558px;width:66px;height:28px;background:#fcf8f5;"></div>
<div style="position:absolute;left:574px;top:558px;width:39px;height:28px;background:#fcf8f5;"></div>
<div style="position:absolute;left:613px;top:558px;width:68px;height:28px;background:#eff7fb;"></div>
<div style="position:absolute;left:681px;top:558px;width:55px;height:28px;background:#eff7fb;"></div>
<div style="position:absolute;left:736px;top:558px;width:54px;height:28px;background:#eff7fb;"></div>
<div style="position:absolute;left:5px;top:558px;width:67px;height:28px;background:#990099;"></div>
<div style="position:absolute;left:5px;top:586px;width:910px;height:28px;background:#ffffff;"></div>
<div style="position:absolute;left:469px;top:586px;width:39px;height:28px;background:#fcf8f5;"></div>
<div style="position:absolute;left:508px;top:586px;width:66px;height:28px;background:#fcf8f5;"></div>
<div style="position:absolute;left:574px;top:586px;width:39px;height:28px;background:#fcf8f5;"></div>
<div style="position:absolute;left:613px;top:586px;width:68px;height:28px;background:#eff7fb;"></div>
<div style="position:absolute;left:681px;top:586px;width:55px;height:28px;background:#eff7fb;"></div>
<div style="position:absolute;left:736px;top:586px;width:54px;height:28px;background:#eff7fb;"></div>
<div style="position:absolute;left:5px;top:586px;width:67px;height:28px;background:#990099;"></div>
<div style="position:absolute;left:5px;top:614px;width:910px;height:28px;background:#f0f0f0;"></div>
<div style="position:absolute;left:469px;top:614px;width:39px;height:28px;background:#fcf8f5;"></div>
<div style="position:absolute;left:508px;top:614px;width:66px;height:28px;background:#fcf8f5;"></div>
<div style="position:absolute;left:574px;top:614px;width:39px;height:28px;background:#fcf8f5;"></div>
<div style="position:absolute;left:613px;top:614px;width:68px;height:28px;background:#eff7fb;"></div>
<div style="position:absolute;left:681px;top:614px;width:55px;height:28px;background:#eff7fb;"></div>
<div style="position:absolute;left:736px;top:614px;width:54px;height:28px;background:#eff7fb;"></div>
<div style="position:absolute;left:5px;top:614px;width:67px;height:28px;background:#990099;"></div>
<div style="position:absolute;left:5px;top:642px;width:910px;height:28px;background:#ffffff;"></div>
<div style="position:absolute;left:469px;top:642px;width:39px;height:28px;background:#fcf8f5;"></div>
<div style="position:absolute;left:508px;top:642px;width:66px;height:28px;background:#fcf8f5;"></div>
<div style="position:absolute;left:574px;top:642px;width:39px;height:28px;background:#fcf8f5;"></div>
<div style="position:absolute;left:613px;top:642px;width:68px;height:28px;background:#eff7fb;"></div>
<div style="position:absolute;left:681px;top:642px;width:55px;height:28px;background:#eff7fb;"></div>
<div style="position:absolute;left:736px;top:642px;width:54px;height:28px;background:#eff7fb;"></div>
<div style="position:absolute;left:5px;top:642px;width:67px;height:28px;background:#990099;"></div>
<div style="position:absolute;left:5px;top:670px;width:910px;height:28px;background:#f0f0f0;"></div>
<div style="position:absolute;left:469px;top:670px;width:39px;height:28px;background:#fcf8f5;"></div>
<div style="position:absolute;left:508px;top:670px;width:66px;height:28px;background:#fcf8f5;"></div>
<div style="position:absolute;left:574px;top:670px;width:39px;height:28px;background:#fcf8f5;"></div>
<div style="position:absolute;left:613px;top:670px;width:68px;height:28px;background:#eff7fb;"></div>
<div style="position:absolute;left:681px;top:670px;width:55px;height:28px;background:#eff7fb;"></div>
<div style="position:absolute;left:736px;top:670px;width:54px;height:28px;background:#eff7fb;"></div>
<div style="position:absolute;left:5px;top:670px;width:67px;height:28px;background:#990099;"></div>
<div style="position:absolute;left:5px;top:698px;width:910px;height:28px;background:#ffffff;"></div>
<div style="position:absolute;left:469px;top:698px;width:39px;height:28px;background:#fcf8f5;"></div>
<div style="position:absolute;left:508px;top:698px;width:66px;height:28px;background:#fcf8f5;"></div>
<div style="position:absolute;left:574px;top:698px;width:39px;height:28px;background:#fcf8f5;"></div>
<div style="position:absolute;left:613px;top:698px;width:68px;height:28px;background:#eff7fb;"></div>
<div style="position:absolute;left:681px;top:698px;width:55px;height:28px;background:#eff7fb;"></div>
<div style="position:absolute;left:736px;top:698px;width:54px;height:28px;background:#eff7fb;"></div>
<div style="position:absolute;left:5px;top:698px;width:67px;height:28px;background:#a00000;"></div>
<div style="position:absolute;left:5px;top:726px;width:910px;height:28px;background:#f0f0f0;"></div>
<div style="position:absolute;left:469px;top:726px;width:39px;height:28px;background:#fcf8f5;"></div>
<div style="position:absolute;left:508px;top:726px;width:66px;height:28px;background:#fcf8f5;"></div>
<div style="position:absolute;left:574px;top:726px;width:39px;height:28px;background:#fcf8f5;"></div>
<div style="position:absolute;left:613px;top:726px;width:68px;height:28px;background:#eff7fb;"></div>
<div style="position:absolute;left:681px;top:726px;width:55px;height:28px;background:#eff7fb;"></div>
<div style="position:absolute;left:736px;top:726px;width:54px;height:28px;background:#eff7fb;"></div>
<div style="position:absolute;left:5px;top:726px;width:67px;height:28px;background:#0aa5a0;"></div>
<div style="position:absolute;left:5px;top:754px;width:910px;height:28px;background:#ffffff;"></div>
<div style="position:absolute;left:5px;top:433px;width:910px;height:1px;background:#b8b8b8;"></div>
<div style="position:absolute;left:469px;top:456px;width:446px;height:1px;background:#b8b8b8;"></div>
<div style="position:absolute;left:5px;top:474px;width:910px;height:1px;background:#b8b8b8;"></div>
<div style="position:absolute;left:5px;top:502px;width:910px;height:1px;background:#b8b8b8;"></div>
<div style="position:absolute;left:5px;top:530px;width:910px;height:1px;background:#b8b8b8;"></div>
<div style="position:absolute;left:5px;top:558px;width:910px;height:1px;background:#b8b8b8;"></div>
<div style="position:absolute;left:5px;top:586px;width:910px;height:1px;background:#b8b8b8;"></div>
<div style="position:absolute;left:5px;top:614px;width:910px;height:1px;background:#b8b8b8;"></div>
<div style="position:absolute;left:5px;top:642px;width:910px;height:1px;background:#b8b8b8;"></div>
<div style="position:absolute;left:5px;top:670px;width:910px;height:1px;background:#b8b8b8;"></div>
<div style="position:absolute;left:5px;top:698px;width:910px;height:1px;background:#b8b8b8;"></div>
<div style="position:absolute;left:5px;top:726px;width:910px;height:1px;background:#b8b8b8;"></div>
<div style="position:absolute;left:5px;top:754px;width:910px;height:1px;background:#b8b8b8;"></div>
<div style="position:absolute;left:5px;top:782px;width:910px;height:1px;background:#b8b8b8;"></div>
<div style="position:absolute;left:5px;top:433px;width:1px;height:322px;background:#b8b8b8;"></div>
<div style="position:absolute;left:72px;top:433px;width:1px;height:322px;background:#b8b8b8;"></div>
<div style="position:absolute;left:140px;top:433px;width:1px;height:322px;background:#b8b8b8;"></div>
<div style="position:absolute;left:237px;top:433px;width:1px;height:322px;background:#b8b8b8;"></div>
<div style="position:absolute;left:317px;top:433px;width:1px;height:322px;background:#b8b8b8;"></div>
<div style="position:absolute;left:353px;top:433px;width:1px;height:322px;background:#b8b8b8;"></div>
<div style="position:absolute;left:469px;top:433px;width:1px;height:322px;background:#b8b8b8;"></div>
<div style="position:absolute;left:508px;top:456px;width:1px;height:299px;background:#b8b8b8;"></div>
<div style="position:absolute;left:574px;top:456px;width:1px;height:299px;background:#b8b8b8;"></div>
<div style="position:absolute;left:613px;top:433px;width:1px;height:322px;background:#b8b8b8;"></div>
<div style="position:absolute;left:681px;top:456px;width:1px;height:299px;background:#b8b8b8;"></div>
<div style="position:absolute;left:736px;top:456px;width:1px;height:299px;background:#b8b8b8;"></div>
<div style="position:absolute;left:790px;top:433px;width:1px;height:322px;background:#b8b8b8;"></div>
<div style="position:absolute;left:826px;top:456px;width:1px;height:299px;background:#b8b8b8;"></div>
<div style="position:absolute;left:861px;top:456px;width:1px;height:299px;background:#b8b8b8;"></div>
<div style="position:absolute;left:914px;top:433px;width:1px;height:322px;background:#b8b8b8;"></div>
<div style="position:absolute;left:5px;top:754px;width:1px;height:29px;background:#b8b8b8;"></div>
<div style="position:absolute;left:914px;top:754px;width:1px;height:29px;background:#b8b8b8;"></div>
<div style="position:absolute;left:5px;top:475px;width:1px;height:27px;background:#e4e4e4;"></div>
<div style="position:absolute;left:72px;top:475px;width:1px;height:27px;background:#e8e8e8;"></div>
<div style="position:absolute;left:6px;top:502px;width:66px;height:1px;background:#d4d4d4;"></div>
<div style="position:absolute;left:5px;top:503px;width:1px;height:27px;background:#e4e4e4;"></div>
<div style="position:absolute;left:72px;top:503px;width:1px;height:27px;background:#e8e8e8;"></div>
<div style="position:absolute;left:6px;top:530px;width:66px;height:1px;background:#d4d4d4;"></div>
<div style="position:absolute;left:5px;top:531px;width:1px;height:27px;background:#e4e4e4;"></div>
<div style="position:absolute;left:72px;top:531px;width:1px;height:27px;background:#e8e8e8;"></div>
<div style="position:absolute;left:6px;top:558px;width:66px;height:1px;background:#d4d4d4;"></div>
<div style="position:absolute;left:5px;top:559px;width:1px;height:27px;background:#e4e4e4;"></div>
<div style="position:absolute;left:72px;top:559px;width:1px;height:27px;background:#e8e8e8;"></div>
<div style="position:absolute;left:6px;top:586px;width:66px;height:1px;background:#d4d4d4;"></div>
<div style="position:absolute;left:5px;top:587px;width:1px;height:27px;background:#e4e4e4;"></div>
<div style="position:absolute;left:72px;top:587px;width:1px;height:27px;background:#e8e8e8;"></div>
<div style="position:absolute;left:6px;top:614px;width:66px;height:1px;background:#d4d4d4;"></div>
<div style="position:absolute;left:5px;top:615px;width:1px;height:27px;background:#e4e4e4;"></div>
<div style="position:absolute;left:72px;top:615px;width:1px;height:27px;background:#e8e8e8;"></div>
<div style="position:absolute;left:6px;top:642px;width:66px;height:1px;background:#d4d4d4;"></div>
<div style="position:absolute;left:5px;top:643px;width:1px;height:27px;background:#e4e4e4;"></div>
<div style="position:absolute;left:72px;top:643px;width:1px;height:27px;background:#e8e8e8;"></div>
<div style="position:absolute;left:6px;top:670px;width:66px;height:1px;background:#d4d4d4;"></div>
<div style="position:absolute;left:5px;top:671px;width:1px;height:27px;background:#e4e4e4;"></div>
<div style="position:absolute;left:72px;top:671px;width:1px;height:27px;background:#e8e8e8;"></div>
<div style="position:absolute;left:6px;top:698px;width:66px;height:1px;background:#d4d4d4;"></div>
<div style="position:absolute;left:5px;top:699px;width:1px;height:27px;background:#e4e4e4;"></div>
<div style="position:absolute;left:72px;top:699px;width:1px;height:27px;background:#e8e8e8;"></div>
<div style="position:absolute;left:6px;top:726px;width:66px;height:1px;background:#d4d4d4;"></div>
<div style="position:absolute;left:5px;top:727px;width:1px;height:27px;background:#e4e4e4;"></div>
<div style="position:absolute;left:72px;top:727px;width:1px;height:27px;background:#e8e8e8;"></div>
<div style="position:absolute;left:5.5px;top:477px;width:66px;height:27px;line-height:27px;text-align:center;color:#ffffff;font-size:12px;font-weight:normal;white-space:nowrap;"><span class="c">德甲</span></div>
<div style="position:absolute;left:73px;top:477px;width:67px;height:27px;line-height:27px;text-align:center;color:#333333;font-size:12px;font-weight:normal;white-space:nowrap;">25-10-18</div>
<div style="position:absolute;left:140.5px;top:477px;width:96px;height:27px;line-height:27px;text-align:center;color:#008000;font-size:12px;font-weight:normal;white-space:nowrap;"><span class="c">柏林联合</span></div>
<div style="position:absolute;left:238px;top:477px;width:79px;height:27px;line-height:27px;text-align:center;color:#333333;font-size:12px;font-weight:normal;white-space:nowrap;"><span style="color:#ff0000">3-1</span>(2-1)</div>
<div style="position:absolute;left:318px;top:477px;width:35px;height:27px;line-height:27px;text-align:center;color:#333333;font-size:12px;font-weight:normal;white-space:nowrap;">6-6</div>
<div style="position:absolute;left:353.5px;top:477px;width:115px;height:27px;line-height:27px;text-align:center;color:#000000;font-size:12px;font-weight:normal;white-space:nowrap;"><span class="c">门兴格拉德巴赫</span></div>
<div style="position:absolute;left:470px;top:477px;width:38px;height:27px;line-height:27px;text-align:center;color:#333333;font-size:12px;font-weight:normal;white-space:nowrap;">0.98</div>
<div style="position:absolute;left:508.5px;top:477px;width:65px;height:27px;line-height:27px;text-align:center;color:#333333;font-size:12px;font-weight:normal;white-space:nowrap;"><span class="c">平</span>/<span class="c">半</span></div>
<div style="position:absolute;left:575px;top:477px;width:38px;height:27px;line-height:27px;text-align:center;color:#333333;font-size:12px;font-weight:normal;white-space:nowrap;">0.90</div>
<div style="position:absolute;left:614px;top:477px;width:67px;height:27px;line-height:27px;text-align:center;color:#333333;font-size:12px;font-weight:normal;white-space:nowrap;">2.25</div>
<div style="position:absolute;left:682px;top:477px;width:54px;height:27px;line-height:27px;text-align:center;color:#333333;font-size:12px;font-weight:normal;white-space:nowrap;">3.38</div>
<div style="position:absolute;left:737px;top:477px;width:53px;height:27px;line-height:27px;text-align:center;color:#333333;font-size:12px;font-weight:normal;white-space:nowrap;">3.18</div>
<div style="position:absolute;left:790.5px;top:477px;width:35px;height:27px;line-height:27px;text-align:center;color:#ff0000;font-size:12px;font-weight:normal;white-space:nowrap;"><span class="c">胜</span></div>
<div style="position:absolute;left:826.5px;top:477px;width:34px;height:27px;line-height:27px;text-align:center;color:#ff0000;font-size:12px;font-weight:normal;white-space:nowrap;"><span class="c">赢</span></div>
<div style="position:absolute;left:861.5px;top:477px;width:52px;height:27px;line-height:27px;text-align:center;color:#ff0000;font-size:12px;font-weight:normal;white-space:nowrap;"><span class="c">大</span></div>
<div style="position:absolute;left:5.5px;top:505px;width:66px;height:27px;line-height:27px;text-align:center;color:#ffffff;font-size:12px;font-weight:normal;white-space:nowrap;"><span class="c">球会友谊</span></div>
<div style="position:absolute;left:73px;top:505px;width:67px;height:27px;line-height:27px;text-align:center;color:#333333;font-size:12px;font-weight:normal;white-space:nowrap;">25-10-09</div>
<div style="position:absolute;left:140.5px;top:505px;width:96px;height:27px;line-height:27px;text-align:center;color:#000000;font-size:12px;font-weight:normal;white-space:nowrap;"><span class="c">路肯瓦德</span></div>
<div style="position:absolute;left:238px;top:505px;width:79px;height:27px;line-height:27px;text-align:center;color:#333333;font-size:12px;font-weight:normal;white-space:nowrap;"><span style="color:#ff0000">0-3</span>(0-1)</div>
<div style="position:absolute;left:353.5px;top:505px;width:115px;height:27px;line-height:27px;text-align:center;color:#008000;font-size:12px;font-weight:normal;white-space:nowrap;"><span class="c">柏林联合</span></div>
<div style="position:absolute;left:790.5px;top:505px;width:35px;height:27px;line-height:27px;text-align:center;color:#ff0000;font-size:12px;font-weight:normal;white-space:nowrap;"><span class="c">胜</span></div>
<div style="position:absolute;left:5.5px;top:533px;width:66px;height:27px;line-height:27px;text-align:center;color:#ffffff;font-size:12px;font-weight:normal;white-space:nowrap;"><span class="c">德甲</span></div>
<div style="position:absolute;left:73px;top:533px;width:67px;height:27px;line-height:27px;text-align:center;color:#333333;font-size:12px;font-weight:normal;white-space:nowrap;">25-10-04</div>
<div style="position:absolute;left:140.5px;top:533px;width:96px;height:27px;line-height:27px;text-align:center;color:#000000;font-size:12px;font-weight:normal;white-space:nowrap;"><span class="c">勒沃库森</span></div>
<div style="position:absolute;left:238px;top:533px;width:79px;height:27px;line-height:27px;text-align:center;color:#333333;font-size:12px;font-weight:normal;white-space:nowrap;"><span style="color:#ff0000">2-0</span>(1-0)</div>
<div style="position:absolute;left:318px;top:533px;width:35px;height:27px;line-height:27px;text-align:center;color:#333333;font-size:12px;font-weight:normal;white-space:nowrap;">4-4</div>
<div style="position:absolute;left:353.5px;top:533px;width:115px;height:27px;line-height:27px;text-align:center;color:#008000;font-size:12px;font-weight:normal;white-space:nowrap;"><span class="c">柏林联合</span></div>
<div style="position:absolute;left:470px;top:533px;width:38px;height:27px;line-height:27px;text-align:center;color:#333333;font-size:12px;font-weight:normal;white-space:nowrap;">0.93</div>
<div style="position:absolute;left:508.5px;top:533px;width:65px;height:27px;line-height:27px;text-align:center;color:#333333;font-size:12px;font-weight:normal;white-space:nowrap;"><span class="c">半</span>/<span class="c">一</span></div>
<div style="position:absolute;left:575px;top:533px;width:38px;height:27px;line-height:27px;text-align:center;color:#333333;font-size:12px;font-weight:normal;white-space:nowrap;">0.95</div>
<div style="position:absolute;left:614px;top:533px;width:67px;height:27px;line-height:27px;text-align:center;color:#333333;font-size:12px;font-weight:normal;white-space:nowrap;">1.68</div>
<div style="position:absolute;left:682px;top:533px;width:54px;height:27px;line-height:27px;text-align:center;color:#333333;font-size:12px;font-weight:normal;white-space:nowrap;">3.97</div>
<div style="position:absolute;left:737px;top:533px;width:53px;height:27px;line-height:27px;text-align:center;color:#333333;font-size:12px;font-weight:normal;white-space:nowrap;">4.87</div>
<div style="position:absolute;left:790.5px;top:533px;width:35px;height:27px;line-height:27px;text-align:center;color:#008000;font-size:12px;font-weight:normal;white-space:nowrap;"><span class="c">负</span></div>
<div style="position:absolute;left:826.5px;top:533px;width:34px;height:27px;line-height:27px;text-align:center;color:#008000;font-size:12px;font-weight:normal;white-space:nowrap;"><span class="c">输</span></div>
<div style="position:absolute;left:861.5px;top:533px;width:52px;height:27px;line-height:27px;text-align:center;color:#008000;font-size:12px;font-weight:normal;white-space:nowrap;"><span class="c">小</span></div>
<div style="position:absolute;left:5.5px;top:561px;width:66px;height:27px;line-height:27px;text-align:center;color:#ffffff;font-size:12px;font-weight:normal;white-space:nowrap;"><span class="c">德甲</span></div>
<div style="position:absolute;left:73px;top:561px;width:67px;height:27px;line-height:27px;text-align:center;color:#333333;font-size:12px;font-weight:normal;white-space:nowrap;">25-09-29</div>
<div style="position:absolute;left:140.5px;top:561px;width:96px;height:27px;line-height:27px;text-align:center;color:#008000;font-size:12px;font-weight:normal;white-space:nowrap;"><span class="c">柏林联合</span></div>
<div style="position:absolute;left:238px;top:561px;width:79px;height:27px;line-height:27px;text-align:center;color:#333333;font-size:12px;font-weight:normal;white-space:nowrap;"><span style="color:#ff0000">0-0</span>(0-0)</div>
<div style="position:absolute;left:318px;top:561px;width:35px;height:27px;line-height:27px;text-align:center;color:#333333;font-size:12px;font-weight:normal;white-space:nowrap;">5-3</div>
<div style="position:absolute;left:353.5px;top:561px;width:115px;height:27px;line-height:27px;text-align:center;color:#000000;font-size:12px;font-weight:normal;white-space:nowrap;"><span class="c">汉堡</span><span style="display:inline-block;background:#f00;color:#fff;font-weight:bold;font-size:11px;line-height:13px;height:13px;padding:0 1px;position:relative;top:-1px">1</span></div>
<div style="position:absolute;left:470px;top:561px;width:38px;height:27px;line-height:27px;text-align:center;color:#333333;font-size:12px;font-weight:normal;white-space:nowrap;">0.99</div>
<div style="position:absolute;left:508.5px;top:561px;width:65px;height:27px;line-height:27px;text-align:center;color:#333333;font-size:12px;font-weight:normal;white-space:nowrap;"><span class="c">半球</span></div>
<div style="position:absolute;left:575px;top:561px;width:38px;height:27px;line-height:27px;text-align:center;color:#333333;font-size:12px;font-weight:normal;white-space:nowrap;">0.89</div>
<div style="position:absolute;left:614px;top:561px;width:67px;height:27px;line-height:27px;text-align:center;color:#333333;font-size:12px;font-weight:normal;white-space:nowrap;">1.97</div>
<div style="position:absolute;left:682px;top:561px;width:54px;height:27px;line-height:27px;text-align:center;color:#333333;font-size:12px;font-weight:normal;white-space:nowrap;">3.59</div>
<div style="position:absolute;left:737px;top:561px;width:53px;height:27px;line-height:27px;text-align:center;color:#333333;font-size:12px;font-weight:normal;white-space:nowrap;">3.73</div>
<div style="position:absolute;left:790.5px;top:561px;width:35px;height:27px;line-height:27px;text-align:center;color:#0000ff;font-size:12px;font-weight:normal;white-space:nowrap;"><span class="c">平</span></div>
<div style="position:absolute;left:826.5px;top:561px;width:34px;height:27px;line-height:27px;text-align:center;color:#008000;font-size:12px;font-weight:normal;white-space:nowrap;"><span class="c">输</span></div>
<div style="position:absolute;left:861.5px;top:561px;width:52px;height:27px;line-height:27px;text-align:center;color:#008000;font-size:12px;font-weight:normal;white-space:nowrap;"><span class="c">小</span></div>
<div style="position:absolute;left:5.5px;top:589px;width:66px;height:27px;line-height:27px;text-align:center;color:#ffffff;font-size:12px;font-weight:normal;white-space:nowrap;"><span class="c">德甲</span></div>
<div style="position:absolute;left:73px;top:589px;width:67px;height:27px;line-height:27px;text-align:center;color:#333333;font-size:12px;font-weight:normal;white-space:nowrap;">25-09-21</div>
<div style="position:absolute;left:140.5px;top:589px;width:96px;height:27px;line-height:27px;text-align:center;color:#000000;font-size:12px;font-weight:normal;white-space:nowrap;"><span class="c">法兰克福</span></div>
<div style="position:absolute;left:238px;top:589px;width:79px;height:27px;line-height:27px;text-align:center;color:#333333;font-size:12px;font-weight:normal;white-space:nowrap;"><span style="color:#ff0000">3-4</span>(1-2)</div>
<div style="position:absolute;left:318px;top:589px;width:35px;height:27px;line-height:27px;text-align:center;color:#333333;font-size:12px;font-weight:normal;white-space:nowrap;">5-1</div>
<div style="position:absolute;left:353.5px;top:589px;width:115px;height:27px;line-height:27px;text-align:center;color:#008000;font-size:12px;font-weight:normal;white-space:nowrap;"><span class="c">柏林联合</span></div>
<div style="position:absolute;left:470px;top:589px;width:38px;height:27px;line-height:27px;text-align:center;color:#333333;font-size:12px;font-weight:normal;white-space:nowrap;">1.05</div>
<div style="position:absolute;left:508.5px;top:589px;width:65px;height:27px;line-height:27px;text-align:center;color:#333333;font-size:12px;font-weight:normal;white-space:nowrap;"><span class="c">一球</span></div>
<div style="position:absolute;left:575px;top:589px;width:38px;height:27px;line-height:27px;text-align:center;color:#333333;font-size:12px;font-weight:normal;white-space:nowrap;">0.83</div>
<div style="position:absolute;left:614px;top:589px;width:67px;height:27px;line-height:27px;text-align:center;color:#333333;font-size:12px;font-weight:normal;white-space:nowrap;">1.61</div>
<div style="position:absolute;left:682px;top:589px;width:54px;height:27px;line-height:27px;text-align:center;color:#333333;font-size:12px;font-weight:normal;white-space:nowrap;">4.24</div>
<div style="position:absolute;left:737px;top:589px;width:53px;height:27px;line-height:27px;text-align:center;color:#333333;font-size:12px;font-weight:normal;white-space:nowrap;">5.07</div>
<div style="position:absolute;left:790.5px;top:589px;width:35px;height:27px;line-height:27px;text-align:center;color:#ff0000;font-size:12px;font-weight:normal;white-space:nowrap;"><span class="c">胜</span></div>
<div style="position:absolute;left:826.5px;top:589px;width:34px;height:27px;line-height:27px;text-align:center;color:#ff0000;font-size:12px;font-weight:normal;white-space:nowrap;"><span class="c">赢</span></div>
<div style="position:absolute;left:861.5px;top:589px;width:52px;height:27px;line-height:27px;text-align:center;color:#ff0000;font-size:12px;font-weight:normal;white-space:nowrap;"><span class="c">大</span></div>
<div style="position:absolute;left:5.5px;top:617px;width:66px;height:27px;line-height:27px;text-align:center;color:#ffffff;font-size:12px;font-weight:normal;white-space:nowrap;"><span class="c">德甲</span></div>
<div style="position:absolute;left:73px;top:617px;width:67px;height:27px;line-height:27px;text-align:center;color:#333333;font-size:12px;font-weight:normal;white-space:nowrap;">25-09-13</div>
<div style="position:absolute;left:140.5px;top:617px;width:96px;height:27px;line-height:27px;text-align:center;color:#008000;font-size:12px;font-weight:normal;white-space:nowrap;"><span style="display:inline-block;background:#f00;color:#fff;font-weight:bold;font-size:11px;line-height:13px;height:13px;padding:0 1px;position:relative;top:-1px">1</span><span class="c">柏林联合</span></div>
<div style="position:absolute;left:238px;top:617px;width:79px;height:27px;line-height:27px;text-align:center;color:#333333;font-size:12px;font-weight:normal;white-space:nowrap;"><span style="color:#ff0000">2-4</span>(0-2)</div>
<div style="position:absolute;left:318px;top:617px;width:35px;height:27px;line-height:27px;text-align:center;color:#333333;font-size:12px;font-weight:normal;white-space:nowrap;">9-2</div>
<div style="position:absolute;left:353.5px;top:617px;width:115px;height:27px;line-height:27px;text-align:center;color:#000000;font-size:12px;font-weight:normal;white-space:nowrap;"><span class="c">霍芬海姆</span></div>
<div style="position:absolute;left:470px;top:617px;width:38px;height:27px;line-height:27px;text-align:center;color:#333333;font-size:12px;font-weight:normal;white-space:nowrap;">1.12</div>
<div style="position:absolute;left:508.5px;top:617px;width:65px;height:27px;line-height:27px;text-align:center;color:#333333;font-size:12px;font-weight:normal;white-space:nowrap;"><span class="c">平手</span></div>
<div style="position:absolute;left:575px;top:617px;width:38px;height:27px;line-height:27px;text-align:center;color:#333333;font-size:12px;font-weight:normal;white-space:nowrap;">0.78</div>
<div style="position:absolute;left:614px;top:617px;width:67px;height:27px;line-height:27px;text-align:center;color:#333333;font-size:12px;font-weight:normal;white-space:nowrap;">2.63</div>
<div style="position:absolute;left:682px;top:617px;width:54px;height:27px;line-height:27px;text-align:center;color:#333333;font-size:12px;font-weight:normal;white-space:nowrap;">3.43</div>
<div style="position:absolute;left:737px;top:617px;width:53px;height:27px;line-height:27px;text-align:center;color:#333333;font-size:12px;font-weight:normal;white-space:nowrap;">2.61</div>
<div style="position:absolute;left:790.5px;top:617px;width:35px;height:27px;line-height:27px;text-align:center;color:#008000;font-size:12px;font-weight:normal;white-space:nowrap;"><span class="c">负</span></div>
<div style="position:absolute;left:826.5px;top:617px;width:34px;height:27px;line-height:27px;text-align:center;color:#008000;font-size:12px;font-weight:normal;white-space:nowrap;"><span class="c">输</span></div>
<div style="position:absolute;left:861.5px;top:617px;width:52px;height:27px;line-height:27px;text-align:center;color:#ff0000;font-size:12px;font-weight:normal;white-space:nowrap;"><span class="c">大</span></div>
<div style="position:absolute;left:5.5px;top:645px;width:66px;height:27px;line-height:27px;text-align:center;color:#ffffff;font-size:12px;font-weight:normal;white-space:nowrap;"><span class="c">德甲</span></div>
<div style="position:absolute;left:73px;top:645px;width:67px;height:27px;line-height:27px;text-align:center;color:#333333;font-size:12px;font-weight:normal;white-space:nowrap;">25-08-31</div>
<div style="position:absolute;left:140.5px;top:645px;width:96px;height:27px;line-height:27px;text-align:center;color:#000000;font-size:12px;font-weight:normal;white-space:nowrap;"><span class="c">多特蒙德</span></div>
<div style="position:absolute;left:238px;top:645px;width:79px;height:27px;line-height:27px;text-align:center;color:#333333;font-size:12px;font-weight:normal;white-space:nowrap;"><span style="color:#ff0000">3-0</span>(1-0)</div>
<div style="position:absolute;left:318px;top:645px;width:35px;height:27px;line-height:27px;text-align:center;color:#333333;font-size:12px;font-weight:normal;white-space:nowrap;">4-6</div>
<div style="position:absolute;left:353.5px;top:645px;width:115px;height:27px;line-height:27px;text-align:center;color:#008000;font-size:12px;font-weight:normal;white-space:nowrap;"><span class="c">柏林联合</span></div>
<div style="position:absolute;left:470px;top:645px;width:38px;height:27px;line-height:27px;text-align:center;color:#333333;font-size:12px;font-weight:normal;white-space:nowrap;">0.94</div>
<div style="position:absolute;left:508.5px;top:645px;width:65px;height:27px;line-height:27px;text-align:center;color:#333333;font-size:12px;font-weight:normal;white-space:nowrap;"><span class="c">一</span>/<span class="c">球半</span></div>
<div style="position:absolute;left:575px;top:645px;width:38px;height:27px;line-height:27px;text-align:center;color:#333333;font-size:12px;font-weight:normal;white-space:nowrap;">0.95</div>
<div style="position:absolute;left:614px;top:645px;width:67px;height:27px;line-height:27px;text-align:center;color:#333333;font-size:12px;font-weight:normal;white-space:nowrap;">1.42</div>
<div style="position:absolute;left:682px;top:645px;width:54px;height:27px;line-height:27px;text-align:center;color:#333333;font-size:12px;font-weight:normal;white-space:nowrap;">4.87</div>
<div style="position:absolute;left:737px;top:645px;width:53px;height:27px;line-height:27px;text-align:center;color:#333333;font-size:12px;font-weight:normal;white-space:nowrap;">6.89</div>
<div style="position:absolute;left:790.5px;top:645px;width:35px;height:27px;line-height:27px;text-align:center;color:#008000;font-size:12px;font-weight:normal;white-space:nowrap;"><span class="c">负</span></div>
<div style="position:absolute;left:826.5px;top:645px;width:34px;height:27px;line-height:27px;text-align:center;color:#008000;font-size:12px;font-weight:normal;white-space:nowrap;"><span class="c">输</span></div>
<div style="position:absolute;left:861.5px;top:645px;width:52px;height:27px;line-height:27px;text-align:center;color:#0000ff;font-size:12px;font-weight:normal;white-space:nowrap;"><span class="c">走</span></div>
<div style="position:absolute;left:5.5px;top:673px;width:66px;height:27px;line-height:27px;text-align:center;color:#ffffff;font-size:12px;font-weight:normal;white-space:nowrap;"><span class="c">德甲</span></div>
<div style="position:absolute;left:73px;top:673px;width:67px;height:27px;line-height:27px;text-align:center;color:#333333;font-size:12px;font-weight:normal;white-space:nowrap;">25-08-23</div>
<div style="position:absolute;left:140.5px;top:673px;width:96px;height:27px;line-height:27px;text-align:center;color:#008000;font-size:12px;font-weight:normal;white-space:nowrap;"><span class="c">柏林联合</span></div>
<div style="position:absolute;left:238px;top:673px;width:79px;height:27px;line-height:27px;text-align:center;color:#333333;font-size:12px;font-weight:normal;white-space:nowrap;"><span style="color:#ff0000">2-1</span>(2-0)</div>
<div style="position:absolute;left:318px;top:673px;width:35px;height:27px;line-height:27px;text-align:center;color:#333333;font-size:12px;font-weight:normal;white-space:nowrap;">5-11</div>
<div style="position:absolute;left:353.5px;top:673px;width:115px;height:27px;line-height:27px;text-align:center;color:#000000;font-size:12px;font-weight:normal;white-space:nowrap;"><span class="c">斯图加特</span></div>
<div style="position:absolute;left:470px;top:673px;width:38px;height:27px;line-height:27px;text-align:center;color:#333333;font-size:12px;font-weight:normal;white-space:nowrap;">1.05</div>
<div style="position:absolute;left:508.5px;top:673px;width:65px;height:27px;line-height:27px;text-align:center;color:#333333;font-size:12px;font-weight:normal;white-space:nowrap;"><span style="color:#ff0000;font-size:15px;position:relative;top:-1px;line-height:0">*</span><span class="c">半球</span></div>
<div style="position:absolute;left:575px;top:673px;width:38px;height:27px;line-height:27px;text-align:center;color:#333333;font-size:12px;font-weight:normal;white-space:nowrap;">0.84</div>
<div style="position:absolute;left:614px;top:673px;width:67px;height:27px;line-height:27px;text-align:center;color:#333333;font-size:12px;font-weight:normal;white-space:nowrap;">3.97</div>
<div style="position:absolute;left:682px;top:673px;width:54px;height:27px;line-height:27px;text-align:center;color:#333333;font-size:12px;font-weight:normal;white-space:nowrap;">3.78</div>
<div style="position:absolute;left:737px;top:673px;width:53px;height:27px;line-height:27px;text-align:center;color:#333333;font-size:12px;font-weight:normal;white-space:nowrap;">1.86</div>
<div style="position:absolute;left:790.5px;top:673px;width:35px;height:27px;line-height:27px;text-align:center;color:#ff0000;font-size:12px;font-weight:normal;white-space:nowrap;"><span class="c">胜</span></div>
<div style="position:absolute;left:826.5px;top:673px;width:34px;height:27px;line-height:27px;text-align:center;color:#ff0000;font-size:12px;font-weight:normal;white-space:nowrap;"><span class="c">赢</span></div>
<div style="position:absolute;left:861.5px;top:673px;width:52px;height:27px;line-height:27px;text-align:center;color:#ff0000;font-size:12px;font-weight:normal;white-space:nowrap;"><span class="c">大</span></div>
<div style="position:absolute;left:5.5px;top:701px;width:66px;height:27px;line-height:27px;text-align:center;color:#ffffff;font-size:12px;font-weight:normal;white-space:nowrap;"><span class="c">德国杯</span></div>
<div style="position:absolute;left:73px;top:701px;width:67px;height:27px;line-height:27px;text-align:center;color:#333333;font-size:12px;font-weight:normal;white-space:nowrap;">25-08-16</div>
<div style="position:absolute;left:140.5px;top:701px;width:96px;height:27px;line-height:27px;text-align:center;color:#000000;font-size:12px;font-weight:normal;white-space:nowrap;"><span class="c">加特斯洛</span></div>
<div style="position:absolute;left:238px;top:701px;width:79px;height:27px;line-height:27px;text-align:center;color:#333333;font-size:12px;font-weight:normal;white-space:nowrap;"><span style="color:#ff0000">0-5</span>(0-3)</div>
<div style="position:absolute;left:318px;top:701px;width:35px;height:27px;line-height:27px;text-align:center;color:#333333;font-size:12px;font-weight:normal;white-space:nowrap;">5-4</div>
<div style="position:absolute;left:353.5px;top:701px;width:115px;height:27px;line-height:27px;text-align:center;color:#008000;font-size:12px;font-weight:normal;white-space:nowrap;"><span class="c">柏林联合</span></div>
<div style="position:absolute;left:470px;top:701px;width:38px;height:27px;line-height:27px;text-align:center;color:#333333;font-size:12px;font-weight:normal;white-space:nowrap;">0.89</div>
<div style="position:absolute;left:508.5px;top:701px;width:65px;height:27px;line-height:27px;text-align:center;color:#333333;font-size:12px;font-weight:normal;white-space:nowrap;"><span style="color:#ff0000;font-size:15px;position:relative;top:-1px;line-height:0">*</span><span class="c">两球</span></div>
<div style="position:absolute;left:575px;top:701px;width:38px;height:27px;line-height:27px;text-align:center;color:#333333;font-size:12px;font-weight:normal;white-space:nowrap;">0.93</div>
<div style="position:absolute;left:614px;top:701px;width:67px;height:27px;line-height:27px;text-align:center;color:#333333;font-size:12px;font-weight:normal;white-space:nowrap;">12.57</div>
<div style="position:absolute;left:682px;top:701px;width:54px;height:27px;line-height:27px;text-align:center;color:#333333;font-size:12px;font-weight:normal;white-space:nowrap;">6.95</div>
<div style="position:absolute;left:737px;top:701px;width:53px;height:27px;line-height:27px;text-align:center;color:#333333;font-size:12px;font-weight:normal;white-space:nowrap;">1.17</div>
<div style="position:absolute;left:790.5px;top:701px;width:35px;height:27px;line-height:27px;text-align:center;color:#ff0000;font-size:12px;font-weight:normal;white-space:nowrap;"><span class="c">胜</span></div>
<div style="position:absolute;left:826.5px;top:701px;width:34px;height:27px;line-height:27px;text-align:center;color:#ff0000;font-size:12px;font-weight:normal;white-space:nowrap;"><span class="c">赢</span></div>
<div style="position:absolute;left:861.5px;top:701px;width:52px;height:27px;line-height:27px;text-align:center;color:#ff0000;font-size:12px;font-weight:normal;white-space:nowrap;"><span class="c">大</span></div>
<div style="position:absolute;left:5.5px;top:729px;width:66px;height:27px;line-height:27px;text-align:center;color:#ffffff;font-size:12px;font-weight:normal;white-space:nowrap;"><span class="c">球会友谊</span></div>
<div style="position:absolute;left:73px;top:729px;width:67px;height:27px;line-height:27px;text-align:center;color:#333333;font-size:12px;font-weight:normal;white-space:nowrap;">25-08-09</div>
<div style="position:absolute;left:140.5px;top:729px;width:96px;height:27px;line-height:27px;text-align:center;color:#008000;font-size:12px;font-weight:normal;white-space:nowrap;"><span class="c">柏林联合</span>(<span class="c">中</span>)</div>
<div style="position:absolute;left:238px;top:729px;width:79px;height:27px;line-height:27px;text-align:center;color:#333333;font-size:12px;font-weight:normal;white-space:nowrap;"><span style="color:#ff0000">0-1</span>(0-0)</div>
<div style="position:absolute;left:318px;top:729px;width:35px;height:27px;line-height:27px;text-align:center;color:#333333;font-size:12px;font-weight:normal;white-space:nowrap;">4-3</div>
<div style="position:absolute;left:353.5px;top:729px;width:115px;height:27px;line-height:27px;text-align:center;color:#000000;font-size:12px;font-weight:normal;white-space:nowrap;"><span class="c">奥林匹亚科斯</span></div>
<div style="position:absolute;left:470px;top:729px;width:38px;height:27px;line-height:27px;text-align:center;color:#333333;font-size:12px;font-weight:normal;white-space:nowrap;">0.86</div>
<div style="position:absolute;left:508.5px;top:729px;width:65px;height:27px;line-height:27px;text-align:center;color:#333333;font-size:12px;font-weight:normal;white-space:nowrap;"><span class="c">平手</span></div>
<div style="position:absolute;left:575px;top:729px;width:38px;height:27px;line-height:27px;text-align:center;color:#333333;font-size:12px;font-weight:normal;white-space:nowrap;">0.96</div>
<div style="position:absolute;left:614px;top:729px;width:67px;height:27px;line-height:27px;text-align:center;color:#333333;font-size:12px;font-weight:normal;white-space:nowrap;">2.53</div>
<div style="position:absolute;left:682px;top:729px;width:54px;height:27px;line-height:27px;text-align:center;color:#333333;font-size:12px;font-weight:normal;white-space:nowrap;">3.33</div>
<div style="position:absolute;left:737px;top:729px;width:53px;height:27px;line-height:27px;text-align:center;color:#333333;font-size:12px;font-weight:normal;white-space:nowrap;">2.54</div>
<div style="position:absolute;left:790.5px;top:729px;width:35px;height:27px;line-height:27px;text-align:center;color:#008000;font-size:12px;font-weight:normal;white-space:nowrap;"><span class="c">负</span></div>
<div style="position:absolute;left:826.5px;top:729px;width:34px;height:27px;line-height:27px;text-align:center;color:#008000;font-size:12px;font-weight:normal;white-space:nowrap;"><span class="c">输</span></div>
<div style="position:absolute;left:861.5px;top:729px;width:52px;height:27px;line-height:27px;text-align:center;color:#008000;font-size:12px;font-weight:normal;white-space:nowrap;"><span class="c">小</span></div>
<div style="position:absolute;left:5px;top:757px;width:910px;height:27px;line-height:27px;text-align:center;color:#333333;font-size:12px;font-weight:normal;white-space:nowrap;letter-spacing:0.2px"><span class="c">近</span><span style="color:#ff0000">10</span><span class="c">场</span>,<span class="c">胜</span>5<span class="c">平</span>1<span class="c">负</span>4, <span class="c">胜率</span>:<span style="color:#3333ff">50%</span> <span class="c">赢率</span>:<span style="color:#3333ff">44.4%</span> <span class="c">大</span>:<span style="color:#3333ff">55.5%</span> <span class="c">单率</span>:<span style="color:#3333ff">60%</span></div></body></html>
